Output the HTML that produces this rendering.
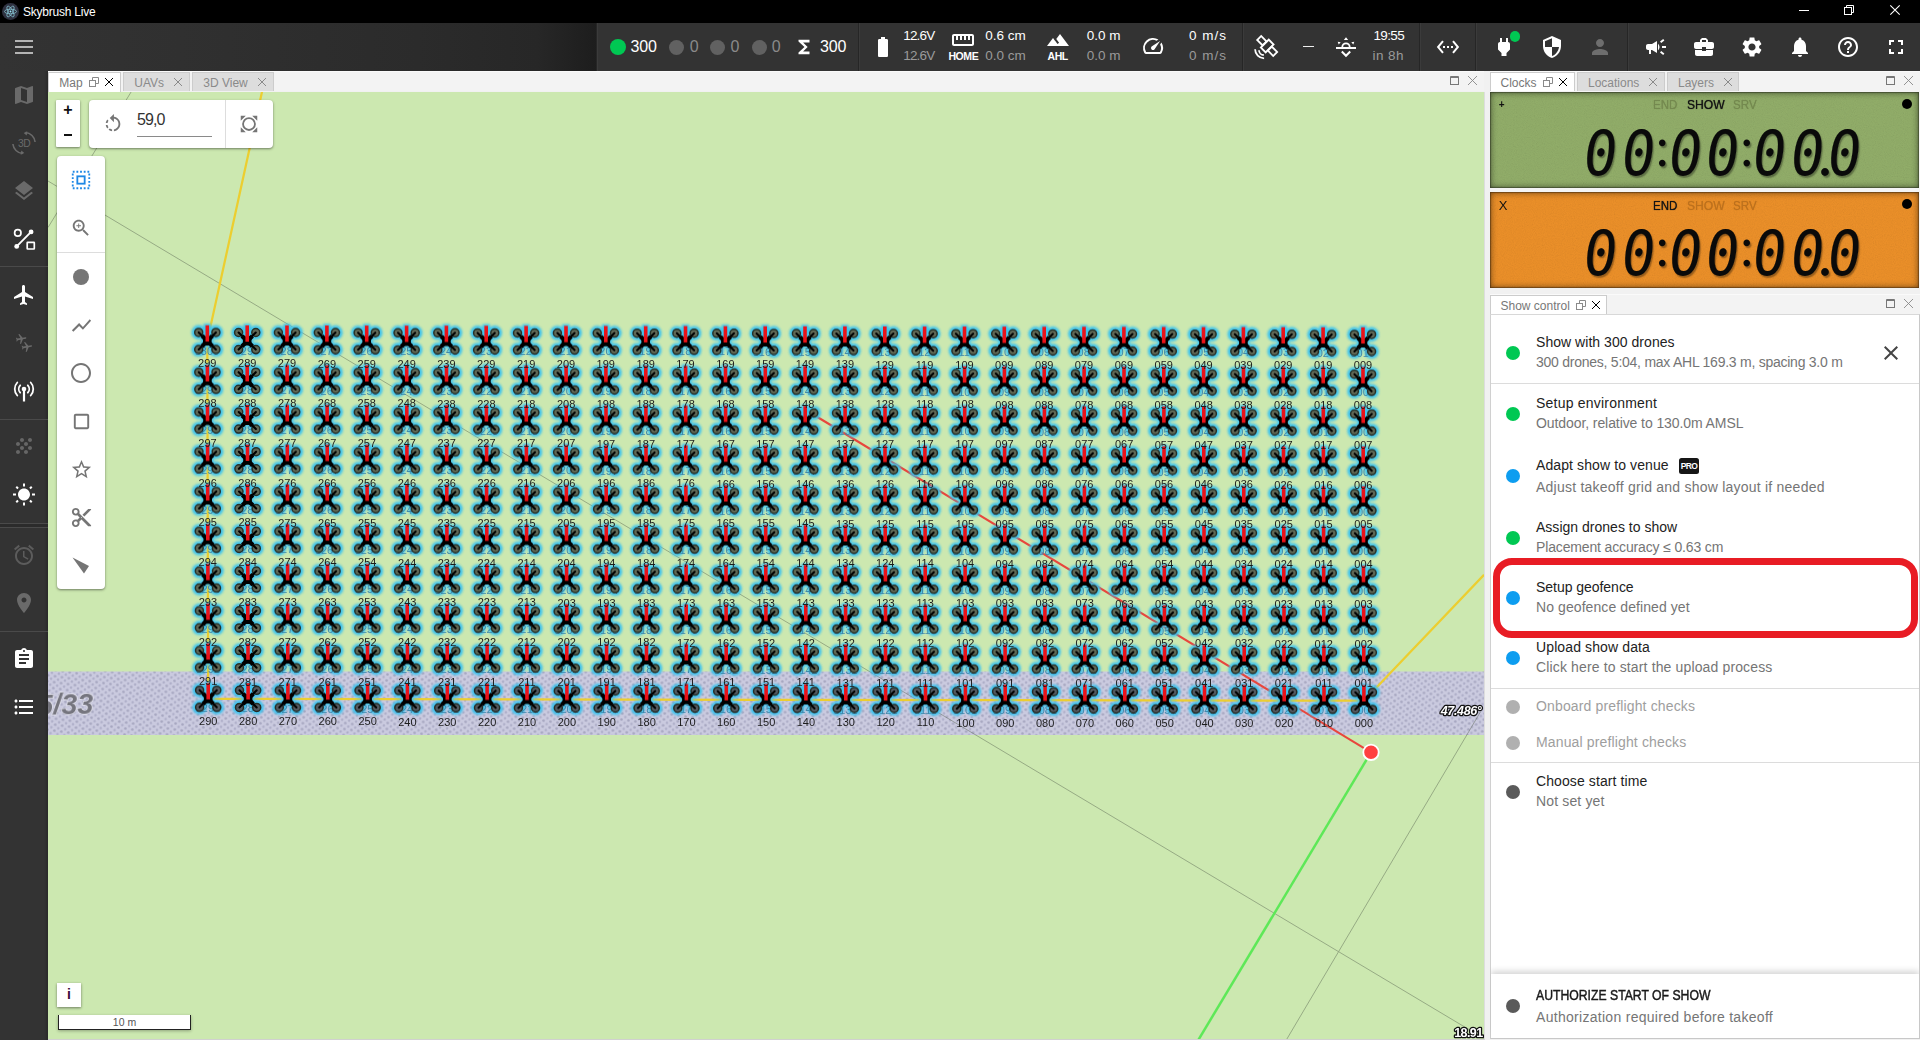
<!DOCTYPE html><html lang="en"><head><meta charset="utf-8"><title>Skybrush Live</title><style>
html,body{margin:0;padding:0}
body{width:1920px;height:1040px;overflow:hidden;position:relative;background:#f1f1f1;font-family:"Liberation Sans",sans-serif;color:#222}
.ic{position:absolute;display:block;overflow:visible}
.t{position:absolute;white-space:nowrap;line-height:1}
.a{position:absolute}
.w{color:#fff}.g{color:#9e9e9e}
.h16{font-size:16px}.h14{font-size:14px}
.tab{position:absolute;top:0;height:19px;border:1px solid #ccc;border-bottom:none;background:#ddd;box-sizing:border-box;font-size:12px;color:#8a8a8a}
.tab.on{background:#fff;height:20px;color:#777}
.tab span{position:absolute;top:3.500px;line-height:12px;white-space:nowrap}
.p1{font-size:14px;color:#222}
.p2{font-size:14px;color:#757575}
.dot{position:absolute;width:14px;height:14px;border-radius:50%}
.lcd{position:absolute;white-space:nowrap;font-family:"DejaVu Sans Mono","Liberation Mono",monospace;font-weight:normal;font-size:62px;line-height:70px;height:70px;color:#0a0a0a;text-shadow:1.500px 2px 1.500px rgba(0,0,0,.35);-webkit-text-stroke:.15px #0a0a0a}
.lcd span{display:inline-block;text-align:center}
.lcd .d{width:37.500px;transform:skewX(-7deg) scaleX(.9)}
.lcd .c{width:9.500px;font-family:"Liberation Serif",serif;font-size:56px;-webkit-text-stroke:0;text-indent:-3px;position:relative;top:-8.600px}
.lcd .p{width:0;font-family:"Liberation Serif",serif;font-weight:bold;font-size:48px;-webkit-text-stroke:0;text-indent:-7.500px;position:relative;top:1px}
</style></head><body>
<div class="a" style="left:0;top:0;width:1920px;height:23px;background:#000"></div>
<svg class="ic" style="left:2px;top:3px" width="17" height="17" viewBox="0 0 24 24" ><circle cx="12" cy="12" r="12" fill="#2f3241"/><g fill="none" stroke="#9feaf9" stroke-width="1.1" opacity=".8"><ellipse cx="12" cy="12" rx="8.5" ry="3.2"/><ellipse cx="12" cy="12" rx="8.5" ry="3.2" transform="rotate(60 12 12)"/><ellipse cx="12" cy="12" rx="8.5" ry="3.2" transform="rotate(120 12 12)"/></g><circle cx="12" cy="12" r="1.3" fill="#9feaf9"/></svg>
<div class="t w" style="left:23px;top:5.84px;font-size:12px;letter-spacing:-0.221px;">Skybrush Live</div>
<div class="a" style="left:1799px;top:10px;width:10px;height:1px;background:#fff"></div>
<svg class="ic" style="left:1844px;top:5px" width="10" height="10" viewBox="0 0 10 10" fill="none" stroke="#fff" stroke-width="1"><rect x=".5" y="2.500" width="7" height="7"/><path d="M2.500 2.500v-2h7v7h-2"/></svg>
<svg class="ic" style="left:1890px;top:5px" width="10" height="10" viewBox="0 0 10 10" fill="none" stroke="#fff" stroke-width="1.100"><path d="M.3 .3l9.400 9.400M9.700 .3l-9.400 9.400"/></svg>
<div class="a" style="left:0;top:23px;width:1920px;height:48px;background:#333"></div>
<div class="a" style="left:0;top:23px;width:597px;height:48px;background:linear-gradient(to right,#333 0,#303030 30%,#2b2b2b 70%,#272727 90%,#1d1d1d 100%)"></div>
<div class="a" style="left:596px;top:23px;width:1px;height:48px;background:#262626"></div>
<div class="a" style="left:597px;top:23px;width:1px;height:48px;background:#3b3b3b"></div>
<div class="a" style="left:858px;top:23px;width:1px;height:48px;background:#262626"></div>
<div class="a" style="left:859px;top:23px;width:1px;height:48px;background:#3b3b3b"></div>
<div class="a" style="left:1242px;top:23px;width:1px;height:48px;background:#262626"></div>
<div class="a" style="left:1243px;top:23px;width:1px;height:48px;background:#3b3b3b"></div>
<div class="a" style="left:1419px;top:23px;width:1px;height:48px;background:#262626"></div>
<div class="a" style="left:1420px;top:23px;width:1px;height:48px;background:#3b3b3b"></div>
<div class="a" style="left:1475px;top:23px;width:1px;height:48px;background:#262626"></div>
<div class="a" style="left:1476px;top:23px;width:1px;height:48px;background:#3b3b3b"></div>
<div class="a" style="left:1627px;top:23px;width:1px;height:48px;background:#262626"></div>
<div class="a" style="left:1628px;top:23px;width:1px;height:48px;background:#3b3b3b"></div>
<div class="a" style="left:15px;top:40px;width:18px;height:2px;background:#b4b4b4"></div>
<div class="a" style="left:15px;top:46px;width:18px;height:2px;background:#b4b4b4"></div>
<div class="a" style="left:15px;top:52px;width:18px;height:2px;background:#b4b4b4"></div>
<div class="a" style="left:610px;top:39px;width:16px;height:16px;border-radius:50%;background:#00c853"></div>
<div class="t w" style="left:630.5px;top:39.06px;font-size:16px;letter-spacing:-.2px">300</div>
<div class="a" style="left:669.3px;top:39.500px;width:15px;height:15px;border-radius:50%;background:#616161"></div>
<div class="t " style="left:689.7px;top:39.06px;font-size:16px;color:#8a8a8a">0</div>
<div class="a" style="left:710.2px;top:39.500px;width:15px;height:15px;border-radius:50%;background:#616161"></div>
<div class="t " style="left:730.6px;top:39.06px;font-size:16px;color:#8a8a8a">0</div>
<div class="a" style="left:751.5px;top:39.500px;width:15px;height:15px;border-radius:50%;background:#616161"></div>
<div class="t " style="left:771.7px;top:39.06px;font-size:16px;color:#8a8a8a">0</div>
<svg class="ic" style="left:793px;top:36px" width="22" height="22" viewBox="0 0 24 24" ><path d="M18 4H6v2l6.500 6L6 18v2h12v-3h-7l5-5-5-5h7z" fill="#fff"/></svg>
<div class="t w" style="left:820px;top:39.06px;font-size:16px;letter-spacing:-.2px">300</div>
<svg class="ic" style="left:871px;top:35px" width="24" height="24" viewBox="0 0 24 24" fill="#fff" opacity="1"><path d="M15.670 4H14V2h-4v2H8.330C7.600 4 7 4.600 7 5.330v15.330C7 21.400 7.600 22 8.330 22h7.330c.74 0 1.340-.6 1.340-1.330V5.330C17 4.600 16.400 4 15.670 4z"/></svg>
<div class="t w" style="right:985.7px;top:29.37px;font-size:13.5px;letter-spacing:-0.856px;">12.6V</div>
<div class="t " style="right:985.7px;top:49.17px;font-size:13.5px;color:#9a9a9a;letter-spacing:-0.856px;">12.6V</div>
<svg class="ic" style="left:950.8px;top:27.6px" width="24" height="24" viewBox="0 0 24 24" fill="#fff" opacity="1"><path d="M21 6H3c-1.100 0-2 .9-2 2v8c0 1.100.9 2 2 2h18c1.100 0 2-.9 2-2V8c0-1.100-.9-2-2-2zm0 10H3V8h2v4h2V8h2v4h2V8h2v4h2V8h2v4h2V8h2v8z"/></svg>
<div class="t w" style="left:948.4px;top:50.71px;font-size:10.5px;font-weight:bold;letter-spacing:-.4px">HOME</div>
<div class="t w" style="right:894.2px;top:29.37px;font-size:13.5px;">0.6 cm</div>
<div class="t " style="right:894.2px;top:49.17px;font-size:13.5px;color:#9a9a9a">0.0 cm</div>
<svg class="ic" style="left:1045.8px;top:27.6px" width="24" height="24" viewBox="0 0 24 24" fill="#fff" opacity="1"><path d="M14 6l-3.750 5 2.850 3.800-1.600 1.200C9.810 13.750 7 10 7 10l-6 8h22L14 6z"/></svg>
<div class="t w" style="left:1047.6px;top:50.71px;font-size:10.5px;font-weight:bold;letter-spacing:-.5px">AHL</div>
<div class="t w" style="right:799.4px;top:29.37px;font-size:13.5px;">0.0 m</div>
<div class="t " style="right:799.4px;top:49.17px;font-size:13.5px;color:#9a9a9a">0.0 m</div>
<svg class="ic" style="left:1141.3px;top:34px" width="24" height="24" viewBox="0 0 24 24" fill="#fff" opacity="1"><path d="M20.380 8.570l-1.230 1.850a8 8 0 0 1-.22 7.580H5.070A8 8 0 0 1 15.580 6.850l1.850-1.230A10 10 0 0 0 3.350 19a2 2 0 0 0 1.720 1h13.850a2 2 0 0 0 1.740-1 10 10 0 0 0-.27-10.440zm-9.790 6.840a2 2 0 0 0 2.830 0l5.660-8.490-8.490 5.660a2 2 0 0 0 0 2.830z"/></svg>
<div class="t w" style="right:693px;top:29.37px;font-size:13.5px;letter-spacing:0.997px;">0 m/s</div>
<div class="t " style="right:693px;top:49.17px;font-size:13.5px;color:#9a9a9a;letter-spacing:0.997px;">0 m/s</div>
<svg class="ic" style="left:1254px;top:35px" width="24" height="24" viewBox="0 0 24 24" ><g transform="translate(13.200 11) rotate(45)" fill="none" stroke="#fff" stroke-width="1.800" stroke-linejoin="miter"><rect x="-11.300" y="-2.800" width="7.600" height="5.600"/><rect x="3.700" y="-2.800" width="7.600" height="5.600"/><rect x="-3.400" y="-5.600" width="6.800" height="11.200"/></g><path d="M1.100 14.300a9 9 0 0 0 9 9M5 15.200a5 5 0 0 0 4.800 4.800" fill="none" stroke="#fff" stroke-width="1.800"/></svg>
<div class="a" style="left:1303px;top:46px;width:11px;height:1.300px;background:#eee"></div>
<svg class="ic" style="left:1334px;top:35px" width="24" height="24" viewBox="0 0 24 24" ><g fill="#fff"><path d="M2 12h20v2H2z"/><path d="M7.400 12a4.600 4.600 0 0 1 9.200 0h-1.800a2.800 2.800 0 0 0-5.600 0z"/><path d="M12 2.200l2.200 2.900H9.800z"/><path d="M3.700 6.700l3 .5-2 2.300zM20.300 6.700l-3 .5 2 2.300z"/></g><path d="M7.800 16.500l4.200 4.300 4.200-4.300" fill="none" stroke="#fff" stroke-width="2"/></svg>
<div class="t w" style="right:516px;top:29.37px;font-size:13.5px;letter-spacing:-0.659px;">19:55</div>
<div class="t " style="right:516px;top:49.17px;font-size:13.5px;color:#9a9a9a;letter-spacing:0.444px;">in 8h</div>
<svg class="ic" style="left:1436px;top:35px" width="24" height="24" viewBox="0 0 24 24" fill="#fff" opacity="1"><path d="M7.770 6.760L6.230 5.480.82 12l5.410 6.520 1.540-1.280L3.420 12l4.350-5.240zM7 13h2v-2H7v2zm10-2h-2v2h2v-2zm-6 2h2v-2h-2v2zm6.770-7.520l-1.540 1.280L20.580 12l-4.350 5.240 1.540 1.280L23.180 12l-5.410-6.520z"/></svg>
<svg class="ic" style="left:1492px;top:35px" width="24" height="24" viewBox="0 0 24 24" fill="#fff" opacity="1"><path d="M16.010 7L16 3h-2v4h-4V3H8v4h-.01C7 6.990 6 7.990 6 8.990v5.490L9.500 18v3h5v-3l3.500-3.510v-5.500c0-1-1-2-1.990-1.990z"/></svg>
<div class="a" style="left:1509.500px;top:31px;width:10.500px;height:10.500px;border-radius:50%;background:#00c853"></div>
<svg class="ic" style="left:1540px;top:35px" width="24" height="24" viewBox="0 0 24 24" fill="#fff" opacity="1"><path d="M12 1L3 5v6c0 5.550 3.840 10.740 9 12 5.160-1.260 9-6.450 9-12V5l-9-4zm0 10.990h7c-.53 4.120-3.280 7.790-7 8.940V12H5V6.300l7-3.110v8.800z"/></svg>
<svg class="ic" style="left:1588px;top:35px" width="24" height="24" viewBox="0 0 24 24" fill="#6e6e6e" opacity="1"><path d="M12 12c2.210 0 4-1.790 4-4s-1.790-4-4-4-4 1.790-4 4 1.790 4 4 4zm0 2c-2.670 0-8 1.340-8 4v2h16v-2c0-2.660-5.330-4-8-4z"/></svg>
<svg class="ic" style="left:1644px;top:35px" width="24" height="24" viewBox="0 0 24 24" fill="#fff" opacity="1"><path d="M18 11v2h4v-2h-4zm-2 6.610c.96.71 2.210 1.650 3.200 2.390.4-.53.8-1.070 1.200-1.600-.99-.74-2.240-1.680-3.200-2.400-.4.540-.8 1.080-1.200 1.610zM20.400 5.600c-.4-.53-.8-1.070-1.200-1.600-.99.74-2.240 1.680-3.200 2.400.4.530.8 1.070 1.200 1.600.96-.72 2.210-1.650 3.200-2.400zM4 9c-1.100 0-2 .9-2 2v2c0 1.100.9 2 2 2h1v4h2v-4h1l5 3V6L8 9H4zm11.500 3c0-1.330-.58-2.530-1.500-3.350v6.690c.92-.810 1.500-2.010 1.500-3.340z"/></svg>
<svg class="ic" style="left:1692px;top:35px" width="24" height="24" viewBox="0 0 24 24" fill="#fff" opacity="1"><path d="M10 16v-1H3.010L3 19c0 1.110.89 2 2 2h14c1.110 0 2-.89 2-2v-4h-7v1h-4zm10-9h-4.010V5l-2-2h-4l-2 2v2H4c-1.100 0-2 .9-2 2v3c0 1.110.89 2 2 2h6v-2h4v2h6c1.100 0 2-.9 2-2V9c0-1.100-.9-2-2-2zm-6 0h-4V5h4v2z"/></svg>
<svg class="ic" style="left:1740px;top:35px" width="24" height="24" viewBox="0 0 24 24" fill="#fff" opacity="1"><path d="M19.14 12.94c.04-.3.06-.61.06-.94 0-.32-.02-.64-.07-.94l2.030-1.580c.18-.14.23-.41.12-.61l-1.920-3.320c-.12-.22-.37-.29-.59-.22l-2.390.96c-.5-.38-1.030-.7-1.620-.94l-.36-2.540c-.04-.24-.24-.41-.48-.41h-3.840c-.24 0-.43.17-.47.41l-.36 2.540c-.59.24-1.130.57-1.620.94l-2.390-.96c-.22-.08-.47 0-.59.22L2.740 8.870c-.12.21-.08.47.12.61l2.030 1.580c-.05.3-.09.63-.09.94s.02.64.07.94l-2.030 1.580c-.18.14-.23.41-.12.61l1.920 3.320c.12.22.37.29.59.22l2.390-.96c.5.38 1.030.7 1.620.94l.36 2.540c.05.24.24.41.48.41h3.840c.24 0 .44-.17.47-.41l.36-2.540c.59-.24 1.130-.56 1.620-.94l2.390.96c.22.08.47 0 .59-.22l1.920-3.320c.12-.22.07-.47-.12-.61l-2.010-1.580zM12 15.600c-1.980 0-3.600-1.620-3.600-3.600s1.620-3.600 3.600-3.600 3.600 1.620 3.600 3.600-1.620 3.600-3.600 3.600z"/></svg>
<svg class="ic" style="left:1788px;top:35px" width="24" height="24" viewBox="0 0 24 24" fill="#fff" opacity="1"><path d="M12 22c1.1 0 2-.9 2-2h-4c0 1.100.89 2 2 2zm6-6v-5c0-3.070-1.640-5.640-4.500-6.320V4c0-.83-.67-1.500-1.500-1.500s-1.500.67-1.500 1.500v.68C7.630 5.360 6 7.920 6 11v5l-2 2v1h16v-1l-2-2z"/></svg>
<svg class="ic" style="left:1836px;top:35px" width="24" height="24" viewBox="0 0 24 24" fill="#fff" opacity="1"><path d="M11 18h2v-2h-2v2zm1-16C6.480 2 2 6.480 2 12s4.480 10 10 10 10-4.480 10-10S17.520 2 12 2zm0 18c-4.410 0-8-3.590-8-8s3.590-8 8-8 8 3.590 8 8-3.590 8-8 8zm0-14c-2.210 0-4 1.790-4 4h2c0-1.100.9-2 2-2s2 .9 2 2c0 2-3 1.750-3 5h2c0-2.250 3-2.500 3-5 0-2.210-1.790-4-4-4z"/></svg>
<svg class="ic" style="left:1884px;top:35px" width="24" height="24" viewBox="0 0 24 24" fill="#fff" opacity="1"><path d="M7 14H5v5h5v-2H7v-3zm-2-4h2V7h3V5H5v5zm12 7h-3v2h5v-5h-2v3zM14 5v2h3v3h2V5h-5z"/></svg>
<div class="a" style="left:0;top:71px;width:48px;height:969px;background:#333"></div>
<div class="a" style="left:44px;top:71px;width:4px;height:969px;background:linear-gradient(to right,rgba(0,0,0,0),rgba(0,0,0,.18))"></div>
<svg class="ic" style="left:12px;top:83px" width="24" height="24" viewBox="0 0 24 24" fill="#6a6a6a" opacity="1"><path d="M20.5 3l-.16.03L15 5.1 9 3 3.36 4.9c-.21.07-.36.25-.36.48V20.5c0 .28.22.5.5.5l.16-.03L9 18.9l6 2.1 5.64-1.9c.21-.07.36-.25.36-.48V3.5c0-.28-.22-.5-.5-.5zM15 19l-6-2.11V5l6 2.11V19z"/></svg>
<svg class="ic" style="left:12px;top:131px" width="24" height="24" viewBox="0 0 24 24" ><g fill="none" stroke="#6a6a6a" stroke-width="1.600"><path d="M13.500 1.500a10.600 10.600 0 0 1 9.600 9.500"/><path d="M10.500 22.500a10.600 10.600 0 0 1-9.600-9.500"/></g><path d="M15.300 .2l-3.600 1.700 3 2.500zM8.700 23.800l3.600-1.700-3-2.500z" fill="#6a6a6a"/><text x="12" y="15.800" font-size="10.300" text-anchor="middle" fill="#6a6a6a" letter-spacing="-.6" font-family="Liberation Sans, sans-serif">3D</text></svg>
<svg class="ic" style="left:12px;top:179px" width="24" height="24" viewBox="0 0 24 24" fill="#6a6a6a" opacity="1"><path d="M11.99 18.54l-7.37-5.73L3 14.07l9 7 9-7-1.63-1.27-7.38 5.74zM12 16l7.36-5.73L21 9l-9-7-9 7 1.63 1.27L12 16z"/></svg>
<svg class="ic" style="left:12px;top:226.7px" width="24" height="24" viewBox="0 0 24 24" ><g fill="none" stroke="#fff"><circle cx="5.800" cy="5.900" r="3.200" stroke-width="1.700"/><path d="M4.700 19.400L19.100 4.900" stroke-width="1.900"/><rect x="15.200" y="15.400" width="7.100" height="6.600" rx=".4" stroke-width="1.700"/></g><circle cx="4.700" cy="19.400" r="2.400" fill="#fff"/><circle cx="19.100" cy="4.900" r="2.400" fill="#fff"/></svg>
<div class="a" style="left:0;top:266px;width:48px;height:1px;background:#4a4a4a"></div>
<svg class="ic" style="left:12px;top:283px" width="24" height="24" viewBox="0 0 24 24" fill="#fff" opacity="1"><path d="M21 16v-2l-8-5V3.5c0-.83-.67-1.5-1.5-1.5S10 2.67 10 3.5V9l-8 5v2l8-2.5V19l-2 1.5V22l3.5-1 3.5 1v-1.5L13 19v-5.5l8 2.5z"/></svg>
<svg class="ic" style="left:12px;top:331px" width="24" height="24" viewBox="0 0 24 24" ><g fill="#6a6a6a"><g transform="translate(9.300 8) rotate(80) scale(.52) translate(-12 -12)"><path d="M21 16v-2l-8-5V3.5c0-.83-.67-1.5-1.5-1.5S10 2.67 10 3.5V9l-8 5v2l8-2.5V19l-2 1.5V22l3.5-1 3.5 1v-1.5L13 19v-5.5l8 2.5z"/></g><g transform="translate(15 16) rotate(80) scale(.52) translate(-12 -12)"><path d="M21 16v-2l-8-5V3.5c0-.83-.67-1.5-1.5-1.5S10 2.67 10 3.5V9l-8 5v2l8-2.5V19l-2 1.5V22l3.5-1 3.5 1v-1.5L13 19v-5.5l8 2.5z"/></g></g></svg>
<svg class="ic" style="left:12px;top:379px" width="24" height="24" viewBox="0 0 24 24" ><g fill="none" stroke="#fff" stroke-width="1.800" stroke-linecap="round"><path d="M8.200 6.300a5.500 5.500 0 0 0 0 7.400M15.800 6.300a5.500 5.500 0 0 1 0 7.400M5.300 3.500a9.500 9.500 0 0 0 0 13M18.700 3.500a9.500 9.500 0 0 1 0 13"/></g><circle cx="12" cy="10" r="2.300" fill="#fff"/><rect x="10.900" y="10" width="2.200" height="12.500" fill="#fff"/></svg>
<div class="a" style="left:0;top:418.500px;width:48px;height:1px;background:#4a4a4a"></div>
<svg class="ic" style="left:12px;top:434px" width="24" height="24" viewBox="0 0 24 24" fill="#666" opacity="1"><path d="M10 12c-1.1 0-2 .9-2 2s.9 2 2 2 2-.9 2-2-.9-2-2-2zM6 8c-1.1 0-2 .9-2 2s.9 2 2 2 2-.9 2-2-.9-2-2-2zm0 8c-1.1 0-2 .9-2 2s.9 2 2 2 2-.9 2-2-.9-2-2-2zm12-8c1.1 0 2-.9 2-2s-.9-2-2-2-2 .9-2 2 .9 2 2 2zm-4 8c-1.1 0-2 .9-2 2s.9 2 2 2 2-.9 2-2-.9-2-2-2zm4-4c-1.1 0-2 .9-2 2s.9 2 2 2 2-.9 2-2-.9-2-2-2zm-4-4c-1.1 0-2 .9-2 2s.9 2 2 2 2-.9 2-2-.9-2-2-2zm-4-4c-1.1 0-2 .9-2 2s.9 2 2 2 2-.9 2-2-.9-2-2-2z"/></svg>
<svg class="ic" style="left:12px;top:482.8px" width="24" height="24" viewBox="0 0 24 24" fill="#fff" opacity="1"><path d="M6.76 4.84l-1.8-1.79-1.41 1.41 1.79 1.79 1.42-1.41zM4 10.5H1v2h3v-2zm9-9.95h-2V3.5h2V.55zm7.45 3.91l-1.41-1.41-1.79 1.79 1.41 1.41 1.79-1.79zm-3.21 13.7l1.79 1.8 1.41-1.41-1.8-1.79-1.4 1.4zM20 10.5v2h3v-2h-3zm-8-5c-3.31 0-6 2.69-6 6s2.69 6 6 6 6-2.69 6-6-2.69-6-6-6zm-1 16.95h2V19.5h-2v2.95zm-7.45-3.91l1.41 1.41 1.79-1.8-1.41-1.41-1.79 1.8z"/></svg>
<div class="a" style="left:0;top:523px;width:48px;height:5px;background:#2b2b2b;border-top:1px solid #4a4a4a;border-bottom:1px solid #4a4a4a;box-sizing:border-box"></div>
<svg class="ic" style="left:12px;top:543px" width="24" height="24" viewBox="0 0 24 24" fill="#5c5c5c" opacity="1"><path d="M22 5.72l-4.6-3.86-1.29 1.53 4.6 3.86L22 5.72zM7.88 3.39L6.6 1.86 2 5.71l1.29 1.53 4.59-3.85zM12.5 8H11v6l4.75 2.85.75-1.23-4-2.37V8zM12 4c-4.97 0-9 4.03-9 9s4.02 9 9 9c4.97 0 9-4.03 9-9s-4.03-9-9-9zm0 16c-3.87 0-7-3.13-7-7s3.13-7 7-7 7 3.13 7 7-3.13 7-7 7z"/></svg>
<svg class="ic" style="left:12px;top:591px" width="24" height="24" viewBox="0 0 24 24" fill="#6a6a6a" opacity="1"><path d="M12 2C8.13 2 5 5.13 5 9c0 5.25 7 13 7 13s7-7.75 7-13c0-3.87-3.13-7-7-7zm0 9.5c-1.38 0-2.5-1.12-2.5-2.5s1.12-2.5 2.5-2.5 2.5 1.12 2.5 2.5-1.12 2.5-2.5 2.5z"/></svg>
<div class="a" style="left:0;top:630.500px;width:48px;height:1px;background:#4a4a4a"></div>
<svg class="ic" style="left:12px;top:647px" width="24" height="24" viewBox="0 0 24 24" fill="#fff" opacity="1"><path d="M19 3h-4.18C14.4 1.84 13.3 1 12 1c-1.3 0-2.4.84-2.82 2H5c-1.1 0-2 .9-2 2v14c0 1.1.9 2 2 2h14c1.1 0 2-.9 2-2V5c0-1.1-.9-2-2-2zm-7 0c.55 0 1 .45 1 1s-.45 1-1 1-1-.45-1-1 .45-1 1-1zm2 14H7v-2h7v2zm3-4H7v-2h10v2zm0-4H7V7h10v2z"/></svg>
<svg class="ic" style="left:12px;top:695px" width="24" height="24" viewBox="0 0 24 24" fill="#fff" opacity="1"><path d="M4 10.5c-.83 0-1.5.67-1.5 1.5s.67 1.5 1.5 1.5 1.5-.67 1.5-1.5-.67-1.5-1.5-1.5zm0-6c-.83 0-1.5.67-1.5 1.5S3.17 7.5 4 7.5 5.500 6.830 5.500 6 4.830 4.500 4 4.500zm0 12c-.83 0-1.500.68-1.500 1.500s.68 1.500 1.500 1.500 1.500-.68 1.500-1.500-.67-1.500-1.500-1.500zM7 19h14v-2H7v2zm0-6h14v-2H7v2zm0-8v2h14V5H7z"/></svg>
<div class="a" style="left:48px;top:71px;width:1436px;height:20px;background:#f3f3f3;border-top:1px solid #fafafa;box-sizing:border-box"></div>
<div class="tab on" style="left:48px;top:72px;width:72.5px"><span style="left:10.3px">Map</span></div>
<svg class="ic" style="left:88.7px;top:77px" width="10" height="10" viewBox="0 0 10 10" fill="none" stroke="#8a8a8a" stroke-width="1"><rect x=".5" y="3.500" width="6" height="6"/><path d="M3.500 3.500v-3h6v6h-3"/></svg>
<svg class="ic" style="left:104.7px;top:78px" width="8" height="8" viewBox="0 0 8 8" fill="none" stroke="#000" stroke-width="1"><path d="M0 0l8 8M8 0l-8 8"/></svg>
<div class="tab" style="left:123px;top:72px;width:66.5px"><span style="left:10.3px">UAVs</span></div>
<svg class="ic" style="left:173.5px;top:78px" width="8" height="8" viewBox="0 0 8 8" fill="none" stroke="#8a8a8a" stroke-width="1"><path d="M0 0l8 8M8 0l-8 8"/></svg>
<div class="tab" style="left:192px;top:72px;width:82px"><span style="left:10.3px">3D View</span></div>
<svg class="ic" style="left:257.5px;top:78px" width="8" height="8" viewBox="0 0 8 8" fill="none" stroke="#8a8a8a" stroke-width="1"><path d="M0 0l8 8M8 0l-8 8"/></svg>
<svg class="ic" style="left:1450px;top:76px" width="9" height="9" viewBox="0 0 9 9" fill="none" stroke="#777"><rect x=".5" y="1" width="8" height="7.500"/><path d="M.5 1h8" stroke-width="2"/></svg>
<svg class="ic" style="left:1468px;top:76px" width="9" height="9" viewBox="0 0 9 9" fill="none" stroke="#888" stroke-width=".9"><path d="M0 0l9 9M9 0l-9 9"/></svg>
<div class="a" id="map" style="left:48px;top:91.5px;width:1435.5px;height:947px;background:#cce8b0;overflow:hidden;border-right:1px solid #ddd;border-bottom:1px solid #d0d0d0">
<svg class="ic" style="left:0;top:0" width="1436" height="948" viewBox="48 91.5 1436 948" font-family="Liberation Sans, sans-serif"><defs>
<pattern id="dots" width="7" height="6" patternUnits="userSpaceOnUse" patternTransform="rotate(8)"><rect width="7" height="6" fill="#cacadf"/><circle cx="1.500" cy="1.500" r="1.300" fill="#a6a6c0"/><circle cx="5" cy="4.500" r="1.200" fill="#aeaec8"/></pattern>
<filter id="bl" x="-5%" y="-5%" width="110%" height="110%"><feGaussianBlur stdDeviation="1.100"/></filter>
<filter id="bl2"><feGaussianBlur stdDeviation=".55"/></filter>
<g id="gl"><circle cx="-8.600" cy="-8.700" r="7.300"/><circle cx="8.600" cy="-8.700" r="7.300"/><circle cx="-8.600" cy="8.400" r="7.300"/><circle cx="8.600" cy="8.400" r="7.300"/><path d="M-8.600-8.700L8.600 8.400M8.600-8.700L-8.600 8.400" stroke="#3fc4ee" stroke-width="8" fill="none"/><rect x="-3.800" y="-17.500" width="7.600" height="18"/></g>
<g id="dr"><g fill="#62644e" stroke="#252a1f" stroke-width="1.500" opacity=".95"><circle cx="-8.600" cy="-8.700" r="4"/><circle cx="8.600" cy="-8.700" r="4"/><circle cx="-8.600" cy="8.400" r="4"/><circle cx="8.600" cy="8.400" r="4"/></g><path d="M-8.600-8.700L8.600 8.400M8.600-8.700L-8.600 8.400" stroke="#000" stroke-width="2.100" fill="none" stroke-linecap="round"/><path d="M-5.200-5.300L5.200 5.100M5.200-5.300L-5.200 5.100" stroke="#000" stroke-width="4.200" fill="none"/><rect x="-4.300" y="-4.400" width="8.600" height="8.800" rx="1" fill="#000"/><rect x="-1.800" y="-15.800" width="3.600" height="16.300" fill="#ea1219"/></g>
<g id="dg"><g fill="#55555a" stroke="#23241c" stroke-width="1.500" opacity=".95"><circle cx="-8.600" cy="-8.700" r="4"/><circle cx="8.600" cy="-8.700" r="4"/><circle cx="-8.600" cy="8.400" r="4"/><circle cx="8.600" cy="8.400" r="4"/></g><path d="M-8.600-8.700L8.600 8.400M8.600-8.700L-8.600 8.400" stroke="#000" stroke-width="2.100" fill="none" stroke-linecap="round"/><path d="M-5.200-5.300L5.200 5.100M5.200-5.300L-5.200 5.100" stroke="#000" stroke-width="4.200" fill="none"/><rect x="-4.300" y="-4.400" width="8.600" height="8.800" rx="1" fill="#000"/><rect x="-1.800" y="-15.800" width="3.600" height="16.300" fill="#ea1219"/></g>
</defs><rect x="48" y="671" width="1436" height="63.500" fill="url(#dots)"/><text x="37" y="713.500" font-size="29" font-style="italic" font-weight="bold" fill="#74747e" stroke="#e6e6f0" stroke-width="1.400" paint-order="stroke" transform="rotate(-1.500 60 705)" filter="url(#bl2)" letter-spacing="0">5/33</text><g stroke="#55604e" stroke-width=".9" fill="none" opacity=".5"><path d="M48 180.500L1484 1038"/><path d="M1480.700 711L1286 1040"/><path d="M132 90L48 227"/></g><path d="M262.300 90L207.300 340.600L208.200 698.400L1363.800 700.200L1484 574.300" fill="none" stroke="#ecce30" stroke-width="2.250" stroke-linejoin="round"/><path d="M805 409L1371 751.800" stroke="#e8463c" stroke-width="2.100" fill="none"/><path d="M1371 751.800L1198 1040" stroke="#5ee858" stroke-width="2.500" fill="none"/><g fill="#3ac2ef" filter="url(#bl)" opacity=".95"><use href="#gl" x="207.3" y="340.6"/><use href="#gl" x="207.4" y="380.4"/><use href="#gl" x="207.5" y="420.1"/><use href="#gl" x="207.6" y="459.9"/><use href="#gl" x="207.7" y="499.6"/><use href="#gl" x="207.8" y="539.4"/><use href="#gl" x="207.9" y="579.2"/><use href="#gl" x="208.0" y="618.9"/><use href="#gl" x="208.1" y="658.7"/><use href="#gl" x="208.2" y="698.4"/><use href="#gl" x="247.2" y="340.7"/><use href="#gl" x="247.2" y="380.4"/><use href="#gl" x="247.3" y="420.2"/><use href="#gl" x="247.5" y="459.9"/><use href="#gl" x="247.6" y="499.7"/><use href="#gl" x="247.7" y="539.5"/><use href="#gl" x="247.8" y="579.2"/><use href="#gl" x="247.8" y="619.0"/><use href="#gl" x="248.0" y="658.8"/><use href="#gl" x="248.1" y="698.5"/><use href="#gl" x="287.0" y="340.7"/><use href="#gl" x="287.1" y="380.5"/><use href="#gl" x="287.2" y="420.3"/><use href="#gl" x="287.3" y="460.0"/><use href="#gl" x="287.4" y="499.8"/><use href="#gl" x="287.5" y="539.5"/><use href="#gl" x="287.6" y="579.3"/><use href="#gl" x="287.7" y="619.1"/><use href="#gl" x="287.8" y="658.8"/><use href="#gl" x="287.9" y="698.6"/><use href="#gl" x="326.9" y="340.8"/><use href="#gl" x="327.0" y="380.6"/><use href="#gl" x="327.1" y="420.3"/><use href="#gl" x="327.2" y="460.1"/><use href="#gl" x="327.2" y="499.8"/><use href="#gl" x="327.4" y="539.6"/><use href="#gl" x="327.5" y="579.4"/><use href="#gl" x="327.6" y="619.1"/><use href="#gl" x="327.7" y="658.9"/><use href="#gl" x="327.8" y="698.7"/><use href="#gl" x="366.7" y="340.9"/><use href="#gl" x="366.8" y="380.6"/><use href="#gl" x="366.9" y="420.4"/><use href="#gl" x="367.0" y="460.2"/><use href="#gl" x="367.1" y="499.9"/><use href="#gl" x="367.2" y="539.7"/><use href="#gl" x="367.3" y="579.4"/><use href="#gl" x="367.4" y="619.2"/><use href="#gl" x="367.5" y="659.0"/><use href="#gl" x="367.6" y="698.7"/><use href="#gl" x="406.6" y="341.0"/><use href="#gl" x="406.7" y="380.7"/><use href="#gl" x="406.8" y="420.5"/><use href="#gl" x="406.9" y="460.2"/><use href="#gl" x="406.9" y="500.0"/><use href="#gl" x="407.1" y="539.8"/><use href="#gl" x="407.2" y="579.5"/><use href="#gl" x="407.2" y="619.3"/><use href="#gl" x="407.4" y="659.0"/><use href="#gl" x="407.4" y="698.8"/><use href="#gl" x="446.4" y="341.0"/><use href="#gl" x="446.5" y="380.8"/><use href="#gl" x="446.6" y="420.5"/><use href="#gl" x="446.7" y="460.3"/><use href="#gl" x="446.8" y="500.1"/><use href="#gl" x="446.9" y="539.8"/><use href="#gl" x="447.0" y="579.6"/><use href="#gl" x="447.1" y="619.3"/><use href="#gl" x="447.2" y="659.1"/><use href="#gl" x="447.3" y="698.9"/><use href="#gl" x="486.2" y="341.1"/><use href="#gl" x="486.4" y="380.9"/><use href="#gl" x="486.4" y="420.6"/><use href="#gl" x="486.6" y="460.4"/><use href="#gl" x="486.6" y="500.1"/><use href="#gl" x="486.8" y="539.9"/><use href="#gl" x="486.9" y="579.7"/><use href="#gl" x="486.9" y="619.4"/><use href="#gl" x="487.1" y="659.2"/><use href="#gl" x="487.1" y="698.9"/><use href="#gl" x="526.1" y="341.2"/><use href="#gl" x="526.2" y="380.9"/><use href="#gl" x="526.3" y="420.7"/><use href="#gl" x="526.4" y="460.4"/><use href="#gl" x="526.5" y="500.2"/><use href="#gl" x="526.6" y="540.0"/><use href="#gl" x="526.7" y="579.7"/><use href="#gl" x="526.8" y="619.5"/><use href="#gl" x="526.9" y="659.2"/><use href="#gl" x="527.0" y="699.0"/><use href="#gl" x="566.0" y="341.2"/><use href="#gl" x="566.1" y="381.0"/><use href="#gl" x="566.2" y="420.8"/><use href="#gl" x="566.2" y="460.5"/><use href="#gl" x="566.4" y="500.3"/><use href="#gl" x="566.5" y="540.0"/><use href="#gl" x="566.6" y="579.8"/><use href="#gl" x="566.7" y="619.6"/><use href="#gl" x="566.8" y="659.3"/><use href="#gl" x="566.9" y="699.1"/><use href="#gl" x="605.8" y="341.3"/><use href="#gl" x="605.9" y="381.1"/><use href="#gl" x="606.0" y="420.8"/><use href="#gl" x="606.1" y="460.6"/><use href="#gl" x="606.2" y="500.3"/><use href="#gl" x="606.3" y="540.1"/><use href="#gl" x="606.4" y="579.9"/><use href="#gl" x="606.5" y="619.6"/><use href="#gl" x="606.6" y="659.4"/><use href="#gl" x="606.7" y="699.1"/><use href="#gl" x="645.7" y="341.4"/><use href="#gl" x="645.8" y="381.1"/><use href="#gl" x="645.9" y="420.9"/><use href="#gl" x="646.0" y="460.6"/><use href="#gl" x="646.1" y="500.4"/><use href="#gl" x="646.2" y="540.2"/><use href="#gl" x="646.3" y="579.9"/><use href="#gl" x="646.4" y="619.7"/><use href="#gl" x="646.5" y="659.5"/><use href="#gl" x="646.6" y="699.2"/><use href="#gl" x="685.5" y="341.4"/><use href="#gl" x="685.6" y="381.2"/><use href="#gl" x="685.7" y="421.0"/><use href="#gl" x="685.8" y="460.7"/><use href="#gl" x="685.9" y="500.5"/><use href="#gl" x="686.0" y="540.2"/><use href="#gl" x="686.1" y="580.0"/><use href="#gl" x="686.2" y="619.8"/><use href="#gl" x="686.3" y="659.5"/><use href="#gl" x="686.4" y="699.3"/><use href="#gl" x="725.4" y="341.5"/><use href="#gl" x="725.5" y="381.3"/><use href="#gl" x="725.6" y="421.0"/><use href="#gl" x="725.7" y="460.8"/><use href="#gl" x="725.8" y="500.6"/><use href="#gl" x="725.9" y="540.3"/><use href="#gl" x="726.0" y="580.1"/><use href="#gl" x="726.1" y="619.8"/><use href="#gl" x="726.2" y="659.6"/><use href="#gl" x="726.3" y="699.4"/><use href="#gl" x="765.2" y="341.6"/><use href="#gl" x="765.3" y="381.3"/><use href="#gl" x="765.4" y="421.1"/><use href="#gl" x="765.5" y="460.9"/><use href="#gl" x="765.6" y="500.6"/><use href="#gl" x="765.7" y="540.4"/><use href="#gl" x="765.8" y="580.1"/><use href="#gl" x="765.9" y="619.9"/><use href="#gl" x="766.0" y="659.7"/><use href="#gl" x="766.1" y="699.4"/><use href="#gl" x="805.0" y="341.7"/><use href="#gl" x="805.1" y="381.4"/><use href="#gl" x="805.2" y="421.2"/><use href="#gl" x="805.3" y="460.9"/><use href="#gl" x="805.4" y="500.7"/><use href="#gl" x="805.5" y="540.4"/><use href="#gl" x="805.6" y="580.2"/><use href="#gl" x="805.8" y="620.0"/><use href="#gl" x="805.8" y="659.7"/><use href="#gl" x="805.9" y="699.5"/><use href="#gl" x="844.9" y="341.7"/><use href="#gl" x="845.0" y="381.5"/><use href="#gl" x="845.1" y="421.2"/><use href="#gl" x="845.2" y="461.0"/><use href="#gl" x="845.3" y="500.8"/><use href="#gl" x="845.4" y="540.5"/><use href="#gl" x="845.5" y="580.3"/><use href="#gl" x="845.6" y="620.0"/><use href="#gl" x="845.7" y="659.8"/><use href="#gl" x="845.8" y="699.6"/><use href="#gl" x="884.8" y="341.8"/><use href="#gl" x="884.9" y="381.6"/><use href="#gl" x="885.0" y="421.3"/><use href="#gl" x="885.0" y="461.1"/><use href="#gl" x="885.1" y="500.8"/><use href="#gl" x="885.2" y="540.6"/><use href="#gl" x="885.4" y="580.4"/><use href="#gl" x="885.5" y="620.1"/><use href="#gl" x="885.5" y="659.9"/><use href="#gl" x="885.6" y="699.6"/><use href="#gl" x="924.6" y="341.9"/><use href="#gl" x="924.7" y="381.6"/><use href="#gl" x="924.8" y="421.4"/><use href="#gl" x="924.9" y="461.1"/><use href="#gl" x="925.0" y="500.9"/><use href="#gl" x="925.1" y="540.7"/><use href="#gl" x="925.2" y="580.4"/><use href="#gl" x="925.3" y="620.2"/><use href="#gl" x="925.4" y="659.9"/><use href="#gl" x="925.5" y="699.7"/><use href="#gl" x="964.5" y="341.9"/><use href="#gl" x="964.6" y="381.7"/><use href="#gl" x="964.7" y="421.4"/><use href="#gl" x="964.8" y="461.2"/><use href="#gl" x="964.9" y="501.0"/><use href="#gl" x="965.0" y="540.7"/><use href="#gl" x="965.1" y="580.5"/><use href="#gl" x="965.2" y="620.3"/><use href="#gl" x="965.2" y="660.0"/><use href="#gl" x="965.4" y="699.8"/><use href="#gl" x="1004.3" y="342.0"/><use href="#gl" x="1004.4" y="381.8"/><use href="#gl" x="1004.5" y="421.5"/><use href="#gl" x="1004.6" y="461.3"/><use href="#gl" x="1004.7" y="501.0"/><use href="#gl" x="1004.8" y="540.8"/><use href="#gl" x="1004.9" y="580.6"/><use href="#gl" x="1005.0" y="620.3"/><use href="#gl" x="1005.1" y="660.1"/><use href="#gl" x="1005.2" y="699.8"/><use href="#gl" x="1044.2" y="342.1"/><use href="#gl" x="1044.2" y="381.8"/><use href="#gl" x="1044.4" y="421.6"/><use href="#gl" x="1044.5" y="461.4"/><use href="#gl" x="1044.6" y="501.1"/><use href="#gl" x="1044.7" y="540.9"/><use href="#gl" x="1044.8" y="580.6"/><use href="#gl" x="1044.9" y="620.4"/><use href="#gl" x="1045.0" y="660.2"/><use href="#gl" x="1045.1" y="699.9"/><use href="#gl" x="1084.0" y="342.1"/><use href="#gl" x="1084.1" y="381.9"/><use href="#gl" x="1084.2" y="421.7"/><use href="#gl" x="1084.3" y="461.4"/><use href="#gl" x="1084.4" y="501.2"/><use href="#gl" x="1084.5" y="540.9"/><use href="#gl" x="1084.6" y="580.7"/><use href="#gl" x="1084.7" y="620.5"/><use href="#gl" x="1084.8" y="660.2"/><use href="#gl" x="1084.9" y="700.0"/><use href="#gl" x="1123.9" y="342.2"/><use href="#gl" x="1124.0" y="382.0"/><use href="#gl" x="1124.1" y="421.7"/><use href="#gl" x="1124.2" y="461.5"/><use href="#gl" x="1124.3" y="501.2"/><use href="#gl" x="1124.4" y="541.0"/><use href="#gl" x="1124.5" y="580.8"/><use href="#gl" x="1124.6" y="620.5"/><use href="#gl" x="1124.7" y="660.3"/><use href="#gl" x="1124.8" y="700.1"/><use href="#gl" x="1163.7" y="342.3"/><use href="#gl" x="1163.8" y="382.0"/><use href="#gl" x="1163.9" y="421.8"/><use href="#gl" x="1164.0" y="461.6"/><use href="#gl" x="1164.1" y="501.3"/><use href="#gl" x="1164.2" y="541.1"/><use href="#gl" x="1164.3" y="580.8"/><use href="#gl" x="1164.4" y="620.6"/><use href="#gl" x="1164.5" y="660.4"/><use href="#gl" x="1164.6" y="700.1"/><use href="#gl" x="1203.5" y="342.4"/><use href="#gl" x="1203.6" y="382.1"/><use href="#gl" x="1203.8" y="421.9"/><use href="#gl" x="1203.8" y="461.6"/><use href="#gl" x="1204.0" y="501.4"/><use href="#gl" x="1204.0" y="541.1"/><use href="#gl" x="1204.1" y="580.9"/><use href="#gl" x="1204.2" y="620.7"/><use href="#gl" x="1204.3" y="660.4"/><use href="#gl" x="1204.5" y="700.2"/><use href="#gl" x="1243.4" y="342.4"/><use href="#gl" x="1243.5" y="382.2"/><use href="#gl" x="1243.6" y="421.9"/><use href="#gl" x="1243.7" y="461.7"/><use href="#gl" x="1243.8" y="501.5"/><use href="#gl" x="1243.9" y="541.2"/><use href="#gl" x="1244.0" y="581.0"/><use href="#gl" x="1244.1" y="620.7"/><use href="#gl" x="1244.2" y="660.5"/><use href="#gl" x="1244.3" y="700.3"/><use href="#gl" x="1283.2" y="342.5"/><use href="#gl" x="1283.3" y="382.2"/><use href="#gl" x="1283.5" y="422.0"/><use href="#gl" x="1283.5" y="461.8"/><use href="#gl" x="1283.7" y="501.5"/><use href="#gl" x="1283.8" y="541.3"/><use href="#gl" x="1283.8" y="581.1"/><use href="#gl" x="1284.0" y="620.8"/><use href="#gl" x="1284.0" y="660.6"/><use href="#gl" x="1284.2" y="700.3"/><use href="#gl" x="1323.1" y="342.6"/><use href="#gl" x="1323.2" y="382.3"/><use href="#gl" x="1323.3" y="422.1"/><use href="#gl" x="1323.4" y="461.8"/><use href="#gl" x="1323.5" y="501.6"/><use href="#gl" x="1323.6" y="541.4"/><use href="#gl" x="1323.7" y="581.1"/><use href="#gl" x="1323.8" y="620.9"/><use href="#gl" x="1323.9" y="660.6"/><use href="#gl" x="1324.0" y="700.4"/><use href="#gl" x="1363.0" y="342.6"/><use href="#gl" x="1363.0" y="382.4"/><use href="#gl" x="1363.2" y="422.1"/><use href="#gl" x="1363.2" y="461.9"/><use href="#gl" x="1363.4" y="501.7"/><use href="#gl" x="1363.5" y="541.4"/><use href="#gl" x="1363.5" y="581.2"/><use href="#gl" x="1363.7" y="621.0"/><use href="#gl" x="1363.8" y="660.7"/><use href="#gl" x="1363.9" y="700.5"/></g><g font-size="11" text-anchor="middle" fill="#3d86aa" opacity=".95"><text x="207.3" y="354.0">s300</text><text x="207.4" y="393.8">s299</text><text x="207.5" y="433.5">s298</text><text x="207.6" y="473.3">s297</text><text x="207.7" y="513.0">s296</text><text x="207.8" y="552.8">s295</text><text x="207.9" y="592.6">s294</text><text x="208.0" y="632.3">s293</text><text x="208.1" y="672.1">s292</text><text x="208.2" y="711.8">s291</text><text x="247.2" y="354.1">s290</text><text x="247.2" y="393.8">s289</text><text x="247.3" y="433.6">s288</text><text x="247.5" y="473.3">s287</text><text x="247.6" y="513.1">s286</text><text x="247.7" y="552.9">s285</text><text x="247.8" y="592.6">s284</text><text x="247.8" y="632.4">s283</text><text x="248.0" y="672.2">s282</text><text x="248.1" y="711.9">s281</text><text x="287.0" y="354.1">s280</text><text x="287.1" y="393.9">s279</text><text x="287.2" y="433.7">s278</text><text x="287.3" y="473.4">s277</text><text x="287.4" y="513.2">s276</text><text x="287.5" y="552.9">s275</text><text x="287.6" y="592.7">s274</text><text x="287.7" y="632.5">s273</text><text x="287.8" y="672.2">s272</text><text x="287.9" y="712.0">s271</text><text x="326.9" y="354.2">s270</text><text x="327.0" y="394.0">s269</text><text x="327.1" y="433.7">s268</text><text x="327.2" y="473.5">s267</text><text x="327.2" y="513.2">s266</text><text x="327.4" y="553.0">s265</text><text x="327.5" y="592.8">s264</text><text x="327.6" y="632.5">s263</text><text x="327.7" y="672.3">s262</text><text x="327.8" y="712.1">s261</text><text x="366.7" y="354.3">s260</text><text x="366.8" y="394.0">s259</text><text x="366.9" y="433.8">s258</text><text x="367.0" y="473.6">s257</text><text x="367.1" y="513.3">s256</text><text x="367.2" y="553.1">s255</text><text x="367.3" y="592.8">s254</text><text x="367.4" y="632.6">s253</text><text x="367.5" y="672.4">s252</text><text x="367.6" y="712.1">s251</text><text x="406.6" y="354.4">s250</text><text x="406.7" y="394.1">s249</text><text x="406.8" y="433.9">s248</text><text x="406.9" y="473.6">s247</text><text x="406.9" y="513.4">s246</text><text x="407.1" y="553.1">s245</text><text x="407.2" y="592.9">s244</text><text x="407.2" y="632.7">s243</text><text x="407.4" y="672.4">s242</text><text x="407.4" y="712.2">s241</text><text x="446.4" y="354.4">s240</text><text x="446.5" y="394.2">s239</text><text x="446.6" y="433.9">s238</text><text x="446.7" y="473.7">s237</text><text x="446.8" y="513.5">s236</text><text x="446.9" y="553.2">s235</text><text x="447.0" y="593.0">s234</text><text x="447.1" y="632.7">s233</text><text x="447.2" y="672.5">s232</text><text x="447.3" y="712.3">s231</text><text x="486.2" y="354.5">s230</text><text x="486.4" y="394.2">s229</text><text x="486.4" y="434.0">s228</text><text x="486.6" y="473.8">s227</text><text x="486.6" y="513.5">s226</text><text x="486.8" y="553.3">s225</text><text x="486.9" y="593.1">s224</text><text x="486.9" y="632.8">s223</text><text x="487.1" y="672.6">s222</text><text x="487.1" y="712.3">s221</text><text x="526.1" y="354.6">s220</text><text x="526.2" y="394.3">s219</text><text x="526.3" y="434.1">s218</text><text x="526.4" y="473.8">s217</text><text x="526.5" y="513.6">s216</text><text x="526.6" y="553.4">s215</text><text x="526.7" y="593.1">s214</text><text x="526.8" y="632.9">s213</text><text x="526.9" y="672.6">s212</text><text x="527.0" y="712.4">s211</text><text x="566.0" y="354.6">s210</text><text x="566.1" y="394.4">s209</text><text x="566.2" y="434.1">s208</text><text x="566.2" y="473.9">s207</text><text x="566.4" y="513.7">s206</text><text x="566.5" y="553.4">s205</text><text x="566.6" y="593.2">s204</text><text x="566.7" y="633.0">s203</text><text x="566.8" y="672.7">s202</text><text x="566.9" y="712.5">s201</text><text x="605.8" y="354.7">s200</text><text x="605.9" y="394.5">s199</text><text x="606.0" y="434.2">s198</text><text x="606.1" y="474.0">s197</text><text x="606.2" y="513.7">s196</text><text x="606.3" y="553.5">s195</text><text x="606.4" y="593.3">s194</text><text x="606.5" y="633.0">s193</text><text x="606.6" y="672.8">s192</text><text x="606.7" y="712.5">s191</text><text x="645.7" y="354.8">s190</text><text x="645.8" y="394.5">s189</text><text x="645.9" y="434.3">s188</text><text x="646.0" y="474.0">s187</text><text x="646.1" y="513.8">s186</text><text x="646.2" y="553.6">s185</text><text x="646.3" y="593.3">s184</text><text x="646.4" y="633.1">s183</text><text x="646.5" y="672.9">s182</text><text x="646.6" y="712.6">s181</text><text x="685.5" y="354.8">s180</text><text x="685.6" y="394.6">s179</text><text x="685.7" y="434.4">s178</text><text x="685.8" y="474.1">s177</text><text x="685.9" y="513.9">s176</text><text x="686.0" y="553.6">s175</text><text x="686.1" y="593.4">s174</text><text x="686.2" y="633.2">s173</text><text x="686.3" y="672.9">s172</text><text x="686.4" y="712.7">s171</text><text x="725.4" y="354.9">s170</text><text x="725.5" y="394.7">s169</text><text x="725.6" y="434.4">s168</text><text x="725.7" y="474.2">s167</text><text x="725.8" y="514.0">s166</text><text x="725.9" y="553.7">s165</text><text x="726.0" y="593.5">s164</text><text x="726.1" y="633.2">s163</text><text x="726.2" y="673.0">s162</text><text x="726.3" y="712.8">s161</text><text x="765.2" y="355.0">s160</text><text x="765.3" y="394.7">s159</text><text x="765.4" y="434.5">s158</text><text x="765.5" y="474.3">s157</text><text x="765.6" y="514.0">s156</text><text x="765.7" y="553.8">s155</text><text x="765.8" y="593.5">s154</text><text x="765.9" y="633.3">s153</text><text x="766.0" y="673.1">s152</text><text x="766.1" y="712.8">s151</text><text x="805.0" y="355.1">s150</text><text x="805.1" y="394.8">s149</text><text x="805.2" y="434.6">s148</text><text x="805.3" y="474.3">s147</text><text x="805.4" y="514.1">s146</text><text x="805.5" y="553.8">s145</text><text x="805.6" y="593.6">s144</text><text x="805.8" y="633.4">s143</text><text x="805.8" y="673.1">s142</text><text x="805.9" y="712.9">s141</text><text x="844.9" y="355.1">s140</text><text x="845.0" y="394.9">s139</text><text x="845.1" y="434.6">s138</text><text x="845.2" y="474.4">s137</text><text x="845.3" y="514.2">s136</text><text x="845.4" y="553.9">s135</text><text x="845.5" y="593.7">s134</text><text x="845.6" y="633.4">s133</text><text x="845.7" y="673.2">s132</text><text x="845.8" y="713.0">s131</text><text x="884.8" y="355.2">s130</text><text x="884.9" y="394.9">s129</text><text x="885.0" y="434.7">s128</text><text x="885.0" y="474.5">s127</text><text x="885.1" y="514.2">s126</text><text x="885.2" y="554.0">s125</text><text x="885.4" y="593.8">s124</text><text x="885.5" y="633.5">s123</text><text x="885.5" y="673.3">s122</text><text x="885.6" y="713.0">s121</text><text x="924.6" y="355.3">s120</text><text x="924.7" y="395.0">s119</text><text x="924.8" y="434.8">s118</text><text x="924.9" y="474.5">s117</text><text x="925.0" y="514.3">s116</text><text x="925.1" y="554.1">s115</text><text x="925.2" y="593.8">s114</text><text x="925.3" y="633.6">s113</text><text x="925.4" y="673.3">s112</text><text x="925.5" y="713.1">s111</text><text x="964.5" y="355.3">s110</text><text x="964.6" y="395.1">s109</text><text x="964.7" y="434.8">s108</text><text x="964.8" y="474.6">s107</text><text x="964.9" y="514.4">s106</text><text x="965.0" y="554.1">s105</text><text x="965.1" y="593.9">s104</text><text x="965.2" y="633.7">s103</text><text x="965.2" y="673.4">s102</text><text x="965.4" y="713.2">s101</text><text x="1004.3" y="355.4">s100</text><text x="1004.4" y="395.2">s099</text><text x="1004.5" y="434.9">s098</text><text x="1004.6" y="474.7">s097</text><text x="1004.7" y="514.4">s096</text><text x="1004.8" y="554.2">s095</text><text x="1004.9" y="594.0">s094</text><text x="1005.0" y="633.7">s093</text><text x="1005.1" y="673.5">s092</text><text x="1005.2" y="713.2">s091</text><text x="1044.2" y="355.5">s090</text><text x="1044.2" y="395.2">s089</text><text x="1044.4" y="435.0">s088</text><text x="1044.5" y="474.8">s087</text><text x="1044.6" y="514.5">s086</text><text x="1044.7" y="554.3">s085</text><text x="1044.8" y="594.0">s084</text><text x="1044.9" y="633.8">s083</text><text x="1045.0" y="673.6">s082</text><text x="1045.1" y="713.3">s081</text><text x="1084.0" y="355.5">s080</text><text x="1084.1" y="395.3">s079</text><text x="1084.2" y="435.1">s078</text><text x="1084.3" y="474.8">s077</text><text x="1084.4" y="514.6">s076</text><text x="1084.5" y="554.3">s075</text><text x="1084.6" y="594.1">s074</text><text x="1084.7" y="633.9">s073</text><text x="1084.8" y="673.6">s072</text><text x="1084.9" y="713.4">s071</text><text x="1123.9" y="355.6">s070</text><text x="1124.0" y="395.4">s069</text><text x="1124.1" y="435.1">s068</text><text x="1124.2" y="474.9">s067</text><text x="1124.3" y="514.6">s066</text><text x="1124.4" y="554.4">s065</text><text x="1124.5" y="594.2">s064</text><text x="1124.6" y="633.9">s063</text><text x="1124.7" y="673.7">s062</text><text x="1124.8" y="713.5">s061</text><text x="1163.7" y="355.7">s060</text><text x="1163.8" y="395.4">s059</text><text x="1163.9" y="435.2">s058</text><text x="1164.0" y="475.0">s057</text><text x="1164.1" y="514.7">s056</text><text x="1164.2" y="554.5">s055</text><text x="1164.3" y="594.2">s054</text><text x="1164.4" y="634.0">s053</text><text x="1164.5" y="673.8">s052</text><text x="1164.6" y="713.5">s051</text><text x="1203.5" y="355.8">s050</text><text x="1203.6" y="395.5">s049</text><text x="1203.8" y="435.3">s048</text><text x="1203.8" y="475.0">s047</text><text x="1204.0" y="514.8">s046</text><text x="1204.0" y="554.5">s045</text><text x="1204.1" y="594.3">s044</text><text x="1204.2" y="634.1">s043</text><text x="1204.3" y="673.8">s042</text><text x="1204.5" y="713.6">s041</text><text x="1243.4" y="355.8">s040</text><text x="1243.5" y="395.6">s039</text><text x="1243.6" y="435.3">s038</text><text x="1243.7" y="475.1">s037</text><text x="1243.8" y="514.9">s036</text><text x="1243.9" y="554.6">s035</text><text x="1244.0" y="594.4">s034</text><text x="1244.1" y="634.1">s033</text><text x="1244.2" y="673.9">s032</text><text x="1244.3" y="713.7">s031</text><text x="1283.2" y="355.9">s030</text><text x="1283.3" y="395.6">s029</text><text x="1283.5" y="435.4">s028</text><text x="1283.5" y="475.2">s027</text><text x="1283.7" y="514.9">s026</text><text x="1283.8" y="554.7">s025</text><text x="1283.8" y="594.5">s024</text><text x="1284.0" y="634.2">s023</text><text x="1284.0" y="674.0">s022</text><text x="1284.2" y="713.7">s021</text><text x="1323.1" y="356.0">s020</text><text x="1323.2" y="395.7">s019</text><text x="1323.3" y="435.5">s018</text><text x="1323.4" y="475.2">s017</text><text x="1323.5" y="515.0">s016</text><text x="1323.6" y="554.8">s015</text><text x="1323.7" y="594.5">s014</text><text x="1323.8" y="634.3">s013</text><text x="1323.9" y="674.0">s012</text><text x="1324.0" y="713.8">s011</text><text x="1363.0" y="356.0">s010</text><text x="1363.0" y="395.8">s009</text><text x="1363.2" y="435.5">s008</text><text x="1363.2" y="475.3">s007</text><text x="1363.4" y="515.1">s006</text><text x="1363.5" y="554.8">s005</text><text x="1363.5" y="594.6">s004</text><text x="1363.7" y="634.4">s003</text><text x="1363.8" y="674.1">s002</text><text x="1363.9" y="713.9">s001</text></g><g><use href="#dr" x="207.3" y="340.6"/><use href="#dr" x="207.4" y="380.4"/><use href="#dr" x="207.5" y="420.1"/><use href="#dr" x="207.6" y="459.9"/><use href="#dr" x="207.7" y="499.6"/><use href="#dr" x="207.8" y="539.4"/><use href="#dr" x="207.9" y="579.2"/><use href="#dr" x="208.0" y="618.9"/><use href="#dr" x="208.1" y="658.7"/><use href="#dg" x="208.2" y="698.4"/><use href="#dr" x="247.2" y="340.7"/><use href="#dr" x="247.2" y="380.4"/><use href="#dr" x="247.3" y="420.2"/><use href="#dr" x="247.5" y="459.9"/><use href="#dr" x="247.6" y="499.7"/><use href="#dr" x="247.7" y="539.5"/><use href="#dr" x="247.8" y="579.2"/><use href="#dr" x="247.8" y="619.0"/><use href="#dr" x="248.0" y="658.8"/><use href="#dg" x="248.1" y="698.5"/><use href="#dr" x="287.0" y="340.7"/><use href="#dr" x="287.1" y="380.5"/><use href="#dr" x="287.2" y="420.3"/><use href="#dr" x="287.3" y="460.0"/><use href="#dr" x="287.4" y="499.8"/><use href="#dr" x="287.5" y="539.5"/><use href="#dr" x="287.6" y="579.3"/><use href="#dr" x="287.7" y="619.1"/><use href="#dr" x="287.8" y="658.8"/><use href="#dg" x="287.9" y="698.6"/><use href="#dr" x="326.9" y="340.8"/><use href="#dr" x="327.0" y="380.6"/><use href="#dr" x="327.1" y="420.3"/><use href="#dr" x="327.2" y="460.1"/><use href="#dr" x="327.2" y="499.8"/><use href="#dr" x="327.4" y="539.6"/><use href="#dr" x="327.5" y="579.4"/><use href="#dr" x="327.6" y="619.1"/><use href="#dr" x="327.7" y="658.9"/><use href="#dg" x="327.8" y="698.7"/><use href="#dr" x="366.7" y="340.9"/><use href="#dr" x="366.8" y="380.6"/><use href="#dr" x="366.9" y="420.4"/><use href="#dr" x="367.0" y="460.2"/><use href="#dr" x="367.1" y="499.9"/><use href="#dr" x="367.2" y="539.7"/><use href="#dr" x="367.3" y="579.4"/><use href="#dr" x="367.4" y="619.2"/><use href="#dr" x="367.5" y="659.0"/><use href="#dg" x="367.6" y="698.7"/><use href="#dr" x="406.6" y="341.0"/><use href="#dr" x="406.7" y="380.7"/><use href="#dr" x="406.8" y="420.5"/><use href="#dr" x="406.9" y="460.2"/><use href="#dr" x="406.9" y="500.0"/><use href="#dr" x="407.1" y="539.8"/><use href="#dr" x="407.2" y="579.5"/><use href="#dr" x="407.2" y="619.3"/><use href="#dr" x="407.4" y="659.0"/><use href="#dg" x="407.4" y="698.8"/><use href="#dr" x="446.4" y="341.0"/><use href="#dr" x="446.5" y="380.8"/><use href="#dr" x="446.6" y="420.5"/><use href="#dr" x="446.7" y="460.3"/><use href="#dr" x="446.8" y="500.1"/><use href="#dr" x="446.9" y="539.8"/><use href="#dr" x="447.0" y="579.6"/><use href="#dr" x="447.1" y="619.3"/><use href="#dr" x="447.2" y="659.1"/><use href="#dg" x="447.3" y="698.9"/><use href="#dr" x="486.2" y="341.1"/><use href="#dr" x="486.4" y="380.9"/><use href="#dr" x="486.4" y="420.6"/><use href="#dr" x="486.6" y="460.4"/><use href="#dr" x="486.6" y="500.1"/><use href="#dr" x="486.8" y="539.9"/><use href="#dr" x="486.9" y="579.7"/><use href="#dr" x="486.9" y="619.4"/><use href="#dr" x="487.1" y="659.2"/><use href="#dg" x="487.1" y="698.9"/><use href="#dr" x="526.1" y="341.2"/><use href="#dr" x="526.2" y="380.9"/><use href="#dr" x="526.3" y="420.7"/><use href="#dr" x="526.4" y="460.4"/><use href="#dr" x="526.5" y="500.2"/><use href="#dr" x="526.6" y="540.0"/><use href="#dr" x="526.7" y="579.7"/><use href="#dr" x="526.8" y="619.5"/><use href="#dr" x="526.9" y="659.2"/><use href="#dg" x="527.0" y="699.0"/><use href="#dr" x="566.0" y="341.2"/><use href="#dr" x="566.1" y="381.0"/><use href="#dr" x="566.2" y="420.8"/><use href="#dr" x="566.2" y="460.5"/><use href="#dr" x="566.4" y="500.3"/><use href="#dr" x="566.5" y="540.0"/><use href="#dr" x="566.6" y="579.8"/><use href="#dr" x="566.7" y="619.6"/><use href="#dr" x="566.8" y="659.3"/><use href="#dg" x="566.9" y="699.1"/><use href="#dr" x="605.8" y="341.3"/><use href="#dr" x="605.9" y="381.1"/><use href="#dr" x="606.0" y="420.8"/><use href="#dr" x="606.1" y="460.6"/><use href="#dr" x="606.2" y="500.3"/><use href="#dr" x="606.3" y="540.1"/><use href="#dr" x="606.4" y="579.9"/><use href="#dr" x="606.5" y="619.6"/><use href="#dr" x="606.6" y="659.4"/><use href="#dg" x="606.7" y="699.1"/><use href="#dr" x="645.7" y="341.4"/><use href="#dr" x="645.8" y="381.1"/><use href="#dr" x="645.9" y="420.9"/><use href="#dr" x="646.0" y="460.6"/><use href="#dr" x="646.1" y="500.4"/><use href="#dr" x="646.2" y="540.2"/><use href="#dr" x="646.3" y="579.9"/><use href="#dr" x="646.4" y="619.7"/><use href="#dr" x="646.5" y="659.5"/><use href="#dg" x="646.6" y="699.2"/><use href="#dr" x="685.5" y="341.4"/><use href="#dr" x="685.6" y="381.2"/><use href="#dr" x="685.7" y="421.0"/><use href="#dr" x="685.8" y="460.7"/><use href="#dr" x="685.9" y="500.5"/><use href="#dr" x="686.0" y="540.2"/><use href="#dr" x="686.1" y="580.0"/><use href="#dr" x="686.2" y="619.8"/><use href="#dr" x="686.3" y="659.5"/><use href="#dg" x="686.4" y="699.3"/><use href="#dr" x="725.4" y="341.5"/><use href="#dr" x="725.5" y="381.3"/><use href="#dr" x="725.6" y="421.0"/><use href="#dr" x="725.7" y="460.8"/><use href="#dr" x="725.8" y="500.6"/><use href="#dr" x="725.9" y="540.3"/><use href="#dr" x="726.0" y="580.1"/><use href="#dr" x="726.1" y="619.8"/><use href="#dr" x="726.2" y="659.6"/><use href="#dg" x="726.3" y="699.4"/><use href="#dr" x="765.2" y="341.6"/><use href="#dr" x="765.3" y="381.3"/><use href="#dr" x="765.4" y="421.1"/><use href="#dr" x="765.5" y="460.9"/><use href="#dr" x="765.6" y="500.6"/><use href="#dr" x="765.7" y="540.4"/><use href="#dr" x="765.8" y="580.1"/><use href="#dr" x="765.9" y="619.9"/><use href="#dr" x="766.0" y="659.7"/><use href="#dg" x="766.1" y="699.4"/><use href="#dr" x="805.0" y="341.7"/><use href="#dr" x="805.1" y="381.4"/><use href="#dr" x="805.2" y="421.2"/><use href="#dr" x="805.3" y="460.9"/><use href="#dr" x="805.4" y="500.7"/><use href="#dr" x="805.5" y="540.4"/><use href="#dr" x="805.6" y="580.2"/><use href="#dr" x="805.8" y="620.0"/><use href="#dr" x="805.8" y="659.7"/><use href="#dg" x="805.9" y="699.5"/><use href="#dr" x="844.9" y="341.7"/><use href="#dr" x="845.0" y="381.5"/><use href="#dr" x="845.1" y="421.2"/><use href="#dr" x="845.2" y="461.0"/><use href="#dr" x="845.3" y="500.8"/><use href="#dr" x="845.4" y="540.5"/><use href="#dr" x="845.5" y="580.3"/><use href="#dr" x="845.6" y="620.0"/><use href="#dr" x="845.7" y="659.8"/><use href="#dg" x="845.8" y="699.6"/><use href="#dr" x="884.8" y="341.8"/><use href="#dr" x="884.9" y="381.6"/><use href="#dr" x="885.0" y="421.3"/><use href="#dr" x="885.0" y="461.1"/><use href="#dr" x="885.1" y="500.8"/><use href="#dr" x="885.2" y="540.6"/><use href="#dr" x="885.4" y="580.4"/><use href="#dr" x="885.5" y="620.1"/><use href="#dr" x="885.5" y="659.9"/><use href="#dg" x="885.6" y="699.6"/><use href="#dr" x="924.6" y="341.9"/><use href="#dr" x="924.7" y="381.6"/><use href="#dr" x="924.8" y="421.4"/><use href="#dr" x="924.9" y="461.1"/><use href="#dr" x="925.0" y="500.9"/><use href="#dr" x="925.1" y="540.7"/><use href="#dr" x="925.2" y="580.4"/><use href="#dr" x="925.3" y="620.2"/><use href="#dr" x="925.4" y="659.9"/><use href="#dg" x="925.5" y="699.7"/><use href="#dr" x="964.5" y="341.9"/><use href="#dr" x="964.6" y="381.7"/><use href="#dr" x="964.7" y="421.4"/><use href="#dr" x="964.8" y="461.2"/><use href="#dr" x="964.9" y="501.0"/><use href="#dr" x="965.0" y="540.7"/><use href="#dr" x="965.1" y="580.5"/><use href="#dr" x="965.2" y="620.3"/><use href="#dr" x="965.2" y="660.0"/><use href="#dg" x="965.4" y="699.8"/><use href="#dr" x="1004.3" y="342.0"/><use href="#dr" x="1004.4" y="381.8"/><use href="#dr" x="1004.5" y="421.5"/><use href="#dr" x="1004.6" y="461.3"/><use href="#dr" x="1004.7" y="501.0"/><use href="#dr" x="1004.8" y="540.8"/><use href="#dr" x="1004.9" y="580.6"/><use href="#dr" x="1005.0" y="620.3"/><use href="#dr" x="1005.1" y="660.1"/><use href="#dg" x="1005.2" y="699.8"/><use href="#dr" x="1044.2" y="342.1"/><use href="#dr" x="1044.2" y="381.8"/><use href="#dr" x="1044.4" y="421.6"/><use href="#dr" x="1044.5" y="461.4"/><use href="#dr" x="1044.6" y="501.1"/><use href="#dr" x="1044.7" y="540.9"/><use href="#dr" x="1044.8" y="580.6"/><use href="#dr" x="1044.9" y="620.4"/><use href="#dr" x="1045.0" y="660.2"/><use href="#dg" x="1045.1" y="699.9"/><use href="#dr" x="1084.0" y="342.1"/><use href="#dr" x="1084.1" y="381.9"/><use href="#dr" x="1084.2" y="421.7"/><use href="#dr" x="1084.3" y="461.4"/><use href="#dr" x="1084.4" y="501.2"/><use href="#dr" x="1084.5" y="540.9"/><use href="#dr" x="1084.6" y="580.7"/><use href="#dr" x="1084.7" y="620.5"/><use href="#dr" x="1084.8" y="660.2"/><use href="#dg" x="1084.9" y="700.0"/><use href="#dr" x="1123.9" y="342.2"/><use href="#dr" x="1124.0" y="382.0"/><use href="#dr" x="1124.1" y="421.7"/><use href="#dr" x="1124.2" y="461.5"/><use href="#dr" x="1124.3" y="501.2"/><use href="#dr" x="1124.4" y="541.0"/><use href="#dr" x="1124.5" y="580.8"/><use href="#dr" x="1124.6" y="620.5"/><use href="#dr" x="1124.7" y="660.3"/><use href="#dg" x="1124.8" y="700.1"/><use href="#dr" x="1163.7" y="342.3"/><use href="#dr" x="1163.8" y="382.0"/><use href="#dr" x="1163.9" y="421.8"/><use href="#dr" x="1164.0" y="461.6"/><use href="#dr" x="1164.1" y="501.3"/><use href="#dr" x="1164.2" y="541.1"/><use href="#dr" x="1164.3" y="580.8"/><use href="#dr" x="1164.4" y="620.6"/><use href="#dr" x="1164.5" y="660.4"/><use href="#dg" x="1164.6" y="700.1"/><use href="#dr" x="1203.5" y="342.4"/><use href="#dr" x="1203.6" y="382.1"/><use href="#dr" x="1203.8" y="421.9"/><use href="#dr" x="1203.8" y="461.6"/><use href="#dr" x="1204.0" y="501.4"/><use href="#dr" x="1204.0" y="541.1"/><use href="#dr" x="1204.1" y="580.9"/><use href="#dr" x="1204.2" y="620.7"/><use href="#dr" x="1204.3" y="660.4"/><use href="#dg" x="1204.5" y="700.2"/><use href="#dr" x="1243.4" y="342.4"/><use href="#dr" x="1243.5" y="382.2"/><use href="#dr" x="1243.6" y="421.9"/><use href="#dr" x="1243.7" y="461.7"/><use href="#dr" x="1243.8" y="501.5"/><use href="#dr" x="1243.9" y="541.2"/><use href="#dr" x="1244.0" y="581.0"/><use href="#dr" x="1244.1" y="620.7"/><use href="#dr" x="1244.2" y="660.5"/><use href="#dg" x="1244.3" y="700.3"/><use href="#dr" x="1283.2" y="342.5"/><use href="#dr" x="1283.3" y="382.2"/><use href="#dr" x="1283.5" y="422.0"/><use href="#dr" x="1283.5" y="461.8"/><use href="#dr" x="1283.7" y="501.5"/><use href="#dr" x="1283.8" y="541.3"/><use href="#dr" x="1283.8" y="581.1"/><use href="#dr" x="1284.0" y="620.8"/><use href="#dr" x="1284.0" y="660.6"/><use href="#dg" x="1284.2" y="700.3"/><use href="#dr" x="1323.1" y="342.6"/><use href="#dr" x="1323.2" y="382.3"/><use href="#dr" x="1323.3" y="422.1"/><use href="#dr" x="1323.4" y="461.8"/><use href="#dr" x="1323.5" y="501.6"/><use href="#dr" x="1323.6" y="541.4"/><use href="#dr" x="1323.7" y="581.1"/><use href="#dr" x="1323.8" y="620.9"/><use href="#dr" x="1323.9" y="660.6"/><use href="#dg" x="1324.0" y="700.4"/><use href="#dr" x="1363.0" y="342.6"/><use href="#dr" x="1363.0" y="382.4"/><use href="#dr" x="1363.2" y="422.1"/><use href="#dr" x="1363.2" y="461.9"/><use href="#dr" x="1363.4" y="501.7"/><use href="#dr" x="1363.5" y="541.4"/><use href="#dr" x="1363.5" y="581.2"/><use href="#dr" x="1363.7" y="621.0"/><use href="#dr" x="1363.8" y="660.7"/><use href="#dg" x="1363.9" y="700.5"/></g><g font-size="11" text-anchor="middle" fill="#1c1c1c"><text x="207.3" y="366.8">299</text><text x="207.4" y="406.6">298</text><text x="207.5" y="446.3">297</text><text x="207.6" y="486.1">296</text><text x="207.7" y="525.8">295</text><text x="207.8" y="565.6">294</text><text x="207.9" y="605.4">293</text><text x="208.0" y="645.1">292</text><text x="208.1" y="684.9">291</text><text x="208.2" y="724.6">290</text><text x="247.2" y="366.9">289</text><text x="247.2" y="406.6">288</text><text x="247.3" y="446.4">287</text><text x="247.5" y="486.1">286</text><text x="247.6" y="525.9">285</text><text x="247.7" y="565.7">284</text><text x="247.8" y="605.4">283</text><text x="247.8" y="645.2">282</text><text x="248.0" y="685.0">281</text><text x="248.1" y="724.7">280</text><text x="287.0" y="366.9">279</text><text x="287.1" y="406.7">278</text><text x="287.2" y="446.5">277</text><text x="287.3" y="486.2">276</text><text x="287.4" y="526.0">275</text><text x="287.5" y="565.7">274</text><text x="287.6" y="605.5">273</text><text x="287.7" y="645.3">272</text><text x="287.8" y="685.0">271</text><text x="287.9" y="724.8">270</text><text x="326.9" y="367.0">269</text><text x="327.0" y="406.8">268</text><text x="327.1" y="446.5">267</text><text x="327.2" y="486.3">266</text><text x="327.2" y="526.0">265</text><text x="327.4" y="565.8">264</text><text x="327.5" y="605.6">263</text><text x="327.6" y="645.3">262</text><text x="327.7" y="685.1">261</text><text x="327.8" y="724.9">260</text><text x="366.7" y="367.1">259</text><text x="366.8" y="406.8">258</text><text x="366.9" y="446.6">257</text><text x="367.0" y="486.4">256</text><text x="367.1" y="526.1">255</text><text x="367.2" y="565.9">254</text><text x="367.3" y="605.6">253</text><text x="367.4" y="645.4">252</text><text x="367.5" y="685.2">251</text><text x="367.6" y="724.9">250</text><text x="406.6" y="367.2">249</text><text x="406.7" y="406.9">248</text><text x="406.8" y="446.7">247</text><text x="406.9" y="486.4">246</text><text x="406.9" y="526.2">245</text><text x="407.1" y="566.0">244</text><text x="407.2" y="605.7">243</text><text x="407.2" y="645.5">242</text><text x="407.4" y="685.2">241</text><text x="407.4" y="725.0">240</text><text x="446.4" y="367.2">239</text><text x="446.5" y="407.0">238</text><text x="446.6" y="446.7">237</text><text x="446.7" y="486.5">236</text><text x="446.8" y="526.3">235</text><text x="446.9" y="566.0">234</text><text x="447.0" y="605.8">233</text><text x="447.1" y="645.5">232</text><text x="447.2" y="685.3">231</text><text x="447.3" y="725.1">230</text><text x="486.2" y="367.3">229</text><text x="486.4" y="407.1">228</text><text x="486.4" y="446.8">227</text><text x="486.6" y="486.6">226</text><text x="486.6" y="526.3">225</text><text x="486.8" y="566.1">224</text><text x="486.9" y="605.9">223</text><text x="486.9" y="645.6">222</text><text x="487.1" y="685.4">221</text><text x="487.1" y="725.1">220</text><text x="526.1" y="367.4">219</text><text x="526.2" y="407.1">218</text><text x="526.3" y="446.9">217</text><text x="526.4" y="486.6">216</text><text x="526.5" y="526.4">215</text><text x="526.6" y="566.2">214</text><text x="526.7" y="605.9">213</text><text x="526.8" y="645.7">212</text><text x="526.9" y="685.4">211</text><text x="527.0" y="725.2">210</text><text x="566.0" y="367.4">209</text><text x="566.1" y="407.2">208</text><text x="566.2" y="446.9">207</text><text x="566.2" y="486.7">206</text><text x="566.4" y="526.5">205</text><text x="566.5" y="566.2">204</text><text x="566.6" y="606.0">203</text><text x="566.7" y="645.8">202</text><text x="566.8" y="685.5">201</text><text x="566.9" y="725.3">200</text><text x="605.8" y="367.5">199</text><text x="605.9" y="407.3">198</text><text x="606.0" y="447.0">197</text><text x="606.1" y="486.8">196</text><text x="606.2" y="526.5">195</text><text x="606.3" y="566.3">194</text><text x="606.4" y="606.1">193</text><text x="606.5" y="645.8">192</text><text x="606.6" y="685.6">191</text><text x="606.7" y="725.3">190</text><text x="645.7" y="367.6">189</text><text x="645.8" y="407.3">188</text><text x="645.9" y="447.1">187</text><text x="646.0" y="486.8">186</text><text x="646.1" y="526.6">185</text><text x="646.2" y="566.4">184</text><text x="646.3" y="606.1">183</text><text x="646.4" y="645.9">182</text><text x="646.5" y="685.7">181</text><text x="646.6" y="725.4">180</text><text x="685.5" y="367.6">179</text><text x="685.6" y="407.4">178</text><text x="685.7" y="447.2">177</text><text x="685.8" y="486.9">176</text><text x="685.9" y="526.7">175</text><text x="686.0" y="566.4">174</text><text x="686.1" y="606.2">173</text><text x="686.2" y="646.0">172</text><text x="686.3" y="685.7">171</text><text x="686.4" y="725.5">170</text><text x="725.4" y="367.7">169</text><text x="725.5" y="407.5">168</text><text x="725.6" y="447.2">167</text><text x="725.7" y="487.0">166</text><text x="725.8" y="526.8">165</text><text x="725.9" y="566.5">164</text><text x="726.0" y="606.3">163</text><text x="726.1" y="646.0">162</text><text x="726.2" y="685.8">161</text><text x="726.3" y="725.6">160</text><text x="765.2" y="367.8">159</text><text x="765.3" y="407.5">158</text><text x="765.4" y="447.3">157</text><text x="765.5" y="487.1">156</text><text x="765.6" y="526.8">155</text><text x="765.7" y="566.6">154</text><text x="765.8" y="606.3">153</text><text x="765.9" y="646.1">152</text><text x="766.0" y="685.9">151</text><text x="766.1" y="725.6">150</text><text x="805.0" y="367.9">149</text><text x="805.1" y="407.6">148</text><text x="805.2" y="447.4">147</text><text x="805.3" y="487.1">146</text><text x="805.4" y="526.9">145</text><text x="805.5" y="566.6">144</text><text x="805.6" y="606.4">143</text><text x="805.8" y="646.2">142</text><text x="805.8" y="685.9">141</text><text x="805.9" y="725.7">140</text><text x="844.9" y="367.9">139</text><text x="845.0" y="407.7">138</text><text x="845.1" y="447.4">137</text><text x="845.2" y="487.2">136</text><text x="845.3" y="527.0">135</text><text x="845.4" y="566.7">134</text><text x="845.5" y="606.5">133</text><text x="845.6" y="646.2">132</text><text x="845.7" y="686.0">131</text><text x="845.8" y="725.8">130</text><text x="884.8" y="368.0">129</text><text x="884.9" y="407.8">128</text><text x="885.0" y="447.5">127</text><text x="885.0" y="487.3">126</text><text x="885.1" y="527.0">125</text><text x="885.2" y="566.8">124</text><text x="885.4" y="606.6">123</text><text x="885.5" y="646.3">122</text><text x="885.5" y="686.1">121</text><text x="885.6" y="725.8">120</text><text x="924.6" y="368.1">119</text><text x="924.7" y="407.8">118</text><text x="924.8" y="447.6">117</text><text x="924.9" y="487.3">116</text><text x="925.0" y="527.1">115</text><text x="925.1" y="566.9">114</text><text x="925.2" y="606.6">113</text><text x="925.3" y="646.4">112</text><text x="925.4" y="686.1">111</text><text x="925.5" y="725.9">110</text><text x="964.5" y="368.1">109</text><text x="964.6" y="407.9">108</text><text x="964.7" y="447.6">107</text><text x="964.8" y="487.4">106</text><text x="964.9" y="527.2">105</text><text x="965.0" y="566.9">104</text><text x="965.1" y="606.7">103</text><text x="965.2" y="646.5">102</text><text x="965.2" y="686.2">101</text><text x="965.4" y="726.0">100</text><text x="1004.3" y="368.2">099</text><text x="1004.4" y="408.0">098</text><text x="1004.5" y="447.7">097</text><text x="1004.6" y="487.5">096</text><text x="1004.7" y="527.2">095</text><text x="1004.8" y="567.0">094</text><text x="1004.9" y="606.8">093</text><text x="1005.0" y="646.5">092</text><text x="1005.1" y="686.3">091</text><text x="1005.2" y="726.0">090</text><text x="1044.2" y="368.3">089</text><text x="1044.2" y="408.0">088</text><text x="1044.4" y="447.8">087</text><text x="1044.5" y="487.6">086</text><text x="1044.6" y="527.3">085</text><text x="1044.7" y="567.1">084</text><text x="1044.8" y="606.8">083</text><text x="1044.9" y="646.6">082</text><text x="1045.0" y="686.4">081</text><text x="1045.1" y="726.1">080</text><text x="1084.0" y="368.3">079</text><text x="1084.1" y="408.1">078</text><text x="1084.2" y="447.9">077</text><text x="1084.3" y="487.6">076</text><text x="1084.4" y="527.4">075</text><text x="1084.5" y="567.1">074</text><text x="1084.6" y="606.9">073</text><text x="1084.7" y="646.7">072</text><text x="1084.8" y="686.4">071</text><text x="1084.9" y="726.2">070</text><text x="1123.9" y="368.4">069</text><text x="1124.0" y="408.2">068</text><text x="1124.1" y="447.9">067</text><text x="1124.2" y="487.7">066</text><text x="1124.3" y="527.5">065</text><text x="1124.4" y="567.2">064</text><text x="1124.5" y="607.0">063</text><text x="1124.6" y="646.7">062</text><text x="1124.7" y="686.5">061</text><text x="1124.8" y="726.3">060</text><text x="1163.7" y="368.5">059</text><text x="1163.8" y="408.2">058</text><text x="1163.9" y="448.0">057</text><text x="1164.0" y="487.8">056</text><text x="1164.1" y="527.5">055</text><text x="1164.2" y="567.3">054</text><text x="1164.3" y="607.0">053</text><text x="1164.4" y="646.8">052</text><text x="1164.5" y="686.6">051</text><text x="1164.6" y="726.3">050</text><text x="1203.5" y="368.6">049</text><text x="1203.6" y="408.3">048</text><text x="1203.8" y="448.1">047</text><text x="1203.8" y="487.8">046</text><text x="1204.0" y="527.6">045</text><text x="1204.0" y="567.4">044</text><text x="1204.1" y="607.1">043</text><text x="1204.2" y="646.9">042</text><text x="1204.3" y="686.6">041</text><text x="1204.5" y="726.4">040</text><text x="1243.4" y="368.6">039</text><text x="1243.5" y="408.4">038</text><text x="1243.6" y="448.1">037</text><text x="1243.7" y="487.9">036</text><text x="1243.8" y="527.7">035</text><text x="1243.9" y="567.4">034</text><text x="1244.0" y="607.2">033</text><text x="1244.1" y="646.9">032</text><text x="1244.2" y="686.7">031</text><text x="1244.3" y="726.5">030</text><text x="1283.2" y="368.7">029</text><text x="1283.3" y="408.4">028</text><text x="1283.5" y="448.2">027</text><text x="1283.5" y="488.0">026</text><text x="1283.7" y="527.7">025</text><text x="1283.8" y="567.5">024</text><text x="1283.8" y="607.3">023</text><text x="1284.0" y="647.0">022</text><text x="1284.0" y="686.8">021</text><text x="1284.2" y="726.5">020</text><text x="1323.1" y="368.8">019</text><text x="1323.2" y="408.5">018</text><text x="1323.3" y="448.3">017</text><text x="1323.4" y="488.0">016</text><text x="1323.5" y="527.8">015</text><text x="1323.6" y="567.6">014</text><text x="1323.7" y="607.3">013</text><text x="1323.8" y="647.1">012</text><text x="1323.9" y="686.8">011</text><text x="1324.0" y="726.6">010</text><text x="1363.0" y="368.8">009</text><text x="1363.0" y="408.6">008</text><text x="1363.2" y="448.3">007</text><text x="1363.2" y="488.1">006</text><text x="1363.4" y="527.9">005</text><text x="1363.5" y="567.6">004</text><text x="1363.5" y="607.4">003</text><text x="1363.7" y="647.2">002</text><text x="1363.8" y="686.9">001</text><text x="1363.9" y="726.7">000</text></g><circle cx="1371" cy="751.800" r="7.700" fill="#ff4040" stroke="#fff" stroke-width="1.800"/><g font-size="12.500" font-weight="bold" font-style="italic" fill="#fff" stroke="#111" stroke-width="2.600" paint-order="stroke" stroke-linejoin="round" ><text x="1481.500" y="714.500" text-anchor="end" letter-spacing="-.35">47.486°</text><text x="1482.500" y="1036" text-anchor="end" font-style="normal" letter-spacing="-.6">18.91</text></g></svg>
<div class="a" style="left:8px;top:8px;width:24px;height:47px;background:#fff;box-shadow:0 1px 3px rgba(0,0,0,.3),0 1px 2px rgba(0,0,0,.2);border-radius:1px;"></div>
<div class="t" style="left:8px;top:10.0px;width:24px;text-align:center;font-size:16px;font-weight:bold;color:#111">+</div>
<div class="a" style="left:16px;top:42.5px;width:8px;height:2px;background:#111"></div>
<div class="a" style="left:41px;top:8.5px;width:184px;height:48px;background:#fff;box-shadow:0 1px 3px rgba(0,0,0,.3),0 1px 2px rgba(0,0,0,.2);border-radius:4px;"></div>
<div class="a" style="left:176.5px;top:8.5px;width:1px;height:48px;background:#ddd"></div>
<svg class="ic" style="left:54px;top:21px" width="22" height="22" viewBox="0 0 24 24" fill="#757575" opacity="1"><path d="M7.110 8.530L5.700 7.110C4.800 8.270 4.240 9.610 4.070 11h2.020c.14-.87.49-1.720 1.020-2.470zM6.090 13H4.070c.17 1.390.72 2.730 1.620 3.890l1.410-1.420c-.52-.75-.87-1.590-1.010-2.470zm1.010 5.320c1.160.9 2.510 1.440 3.900 1.610V17.900c-.87-.15-1.710-.49-2.460-1.030L7.100 18.320zM13 4.070V1L8.450 5.550 13 10V6.090c2.840.48 5 2.940 5 5.910s-2.160 5.430-5 5.910v2.020c3.950-.49 7-3.850 7-7.930s-3.050-7.440-7-7.930z"/></svg>
<div class="t" style="left:89px;top:20.66px;font-size:16px;color:#333;letter-spacing:-.9px">59,0</div>
<div class="a" style="left:89px;top:44.5px;width:75px;height:1px;background:#8a8a8a"></div>
<svg class="ic" style="left:190px;top:21.5px" width="22" height="22" viewBox="0 0 24 24" ><circle cx="12" cy="12" r="6.500" fill="none" stroke="#757575" stroke-width="2"/><path d="M3 3h5.500L3 8.500zM21 3h-5.500L21 8.500zM3 21h5.500L3 15.500zM21 21h-5.500L21 15.500z" fill="#757575"/></svg>
<div class="a" style="left:9px;top:64.5px;width:48px;height:433px;background:#fff;box-shadow:0 1px 3px rgba(0,0,0,.3),0 1px 2px rgba(0,0,0,.2);border-radius:4px;"></div>
<div class="a" style="left:9px;top:160.5px;width:48px;height:1px;background:#ddd"></div>
<svg class="ic" style="left:22px;top:77.5px" width="22" height="22" viewBox="0 0 24 24" ><rect x="3" y="3" width="18" height="18" fill="none" stroke="#1e88e5" stroke-width="2" stroke-dasharray="2 2"/><rect x="8" y="8" width="8" height="8" fill="none" stroke="#1e88e5" stroke-width="2"/></svg>
<svg class="ic" style="left:22px;top:125.5px" width="22" height="22" viewBox="0 0 24 24" fill="#757575" opacity="1"><path d="M15.500 14h-.79l-.28-.27C15.410 12.590 16 11.110 16 9.500 16 5.910 13.090 3 9.500 3S3 5.910 3 9.500 5.910 16 9.500 16c1.610 0 3.090-.59 4.230-1.570l.27.28v.79l5 4.990L20.490 19l-4.990-5zm-6 0C7.010 14 5 11.990 5 9.500S7.010 5 9.500 5 14 7.010 14 9.500 11.990 14 9.500 14zm2.500-4h-2v2H9v-2H7V9h2V7h1v2h2v1z"/></svg>
<div class="a" style="left:25px;top:177.5px;width:16px;height:16px;border-radius:50%;background:#757575"></div>
<svg class="ic" style="left:21.5px;top:222px" width="23" height="23" viewBox="0 0 24 24" fill="#757575" opacity="1"><path d="M3.500 18.490l6-6.010 4 4L22 6.920l-1.410-1.410-7.090 7.970-4-4L2 16.990z"/></svg>
<svg class="ic" style="left:21px;top:269.5px" width="24" height="24" viewBox="0 0 24 24" fill="#757575" opacity="1"><path d="M12 2C6.470 2 2 6.470 2 12s4.470 10 10 10 10-4.470 10-10S17.530 2 12 2zm0 18c-4.410 0-8-3.590-8-8s3.590-8 8-8 8 3.590 8 8-3.590 8-8 8z"/></svg>
<svg class="ic" style="left:21.5px;top:318px" width="23" height="23" viewBox="0 0 24 24" fill="#757575" opacity="1"><path d="M18 4H6c-1.100 0-2 .9-2 2v12c0 1.100.9 2 2 2h12c1.100 0 2-.9 2-2V6c0-1.100-.9-2-2-2zm0 14H6V6h12v12z"/></svg>
<svg class="ic" style="left:21.5px;top:366px" width="23" height="23" viewBox="0 0 24 24" fill="#757575" opacity="1"><path d="M22 9.240l-7.190-.62L12 2 9.190 8.630 2 9.240l5.460 4.730L5.820 21 12 17.270 18.180 21l-1.630-7.030L22 9.240zM12 15.400l-3.760 2.270 1-4.280-3.320-2.880 4.380-.38L12 6.100l1.710 4.040 4.380.38-3.320 2.880 1 4.280L12 15.400z"/></svg>
<svg class="ic" style="left:21.5px;top:414px" width="23" height="23" viewBox="0 0 24 24" fill="#757575" opacity="1"><path d="M9.640 7.640c.23-.5.36-1.050.36-1.640 0-2.210-1.790-4-4-4S2 3.790 2 6s1.790 4 4 4c.59 0 1.140-.13 1.640-.36L10 12l-2.360 2.360C7.140 14.130 6.590 14 6 14c-2.210 0-4 1.790-4 4s1.790 4 4 4 4-1.790 4-4c0-.59-.13-1.140-.36-1.640L12 14l7 7h3v-1L9.640 7.640zM6 8c-1.100 0-2-.89-2-2s.9-2 2-2 2 .89 2 2-.9 2-2 2zm0 12c-1.100 0-2-.89-2-2s.9-2 2-2 2 .89 2 2-.9 2-2 2zm6-7.500c-.28 0-.5-.22-.5-.5s.22-.5.5-.5.500.22.500.5-.22.500-.5.500zM19 3l-6 6 2 2 7-7V3h-3z"/></svg>
<svg class="ic" style="left:21px;top:461.5px" width="24" height="24" viewBox="0 0 24 24" ><path d="M3.500 4.500L20 13l-5 7.500z" fill="#757575"/></svg>
<div class="a" style="left:9px;top:891.5px;width:24px;height:24px;background:#fff;box-shadow:0 1px 3px rgba(0,0,0,.3),0 1px 2px rgba(0,0,0,.2);"></div>
<div class="t" style="left:9px;top:895.5px;width:24px;text-align:center;font-size:14px;font-weight:bold;color:#3a0a3a">i</div>
<div class="a" style="left:10px;top:923.0px;width:131px;height:14px;background:#fff;border:1px solid #222;border-top:none;box-sizing:content-box;box-shadow:0 1px 3px rgba(0,0,0,.3)"></div>
<div class="t" style="left:10px;top:925.0px;width:133px;text-align:center;font-size:10.500px;color:#555">10 m</div>
</div>
<div class="a" style="left:1490px;top:71px;width:430px;height:20px;background:#f3f3f3;border-top:1px solid #fafafa;box-sizing:border-box"></div>
<div class="tab on" style="left:1490px;top:72px;width:84.5px"><span style="left:9.5px">Clocks</span></div>
<svg class="ic" style="left:1543px;top:77px" width="10" height="10" viewBox="0 0 10 10" fill="none" stroke="#8a8a8a" stroke-width="1"><rect x=".5" y="3.500" width="6" height="6"/><path d="M3.500 3.500v-3h6v6h-3"/></svg>
<svg class="ic" style="left:1558.5px;top:78px" width="8" height="8" viewBox="0 0 8 8" fill="none" stroke="#000" stroke-width="1"><path d="M0 0l8 8M8 0l-8 8"/></svg>
<div class="tab" style="left:1577px;top:72px;width:87.5px"><span style="left:10px">Locations</span></div>
<svg class="ic" style="left:1648.5px;top:78px" width="8" height="8" viewBox="0 0 8 8" fill="none" stroke="#8a8a8a" stroke-width="1"><path d="M0 0l8 8M8 0l-8 8"/></svg>
<div class="tab" style="left:1667px;top:72px;width:72px"><span style="left:10px">Layers</span></div>
<svg class="ic" style="left:1723.5px;top:78px" width="8" height="8" viewBox="0 0 8 8" fill="none" stroke="#8a8a8a" stroke-width="1"><path d="M0 0l8 8M8 0l-8 8"/></svg>
<svg class="ic" style="left:1886px;top:76px" width="9" height="9" viewBox="0 0 9 9" fill="none" stroke="#777"><rect x=".5" y="1" width="8" height="7.500"/><path d="M.5 1h8" stroke-width="2"/></svg>
<svg class="ic" style="left:1904px;top:76px" width="9" height="9" viewBox="0 0 9 9" fill="none" stroke="#888" stroke-width=".9"><path d="M0 0l9 9M9 0l-9 9"/></svg>
<div class="a" style="left:1490px;top:91px;width:430px;height:197px;background:#f4f4f4"></div>
<div class="a" style="left:1490px;top:92px;width:428.600px;height:95.5px;background:#93af6a;box-shadow:inset 0 0 6px 1px rgba(0,0,0,.45),inset 0 0 1px 1px rgba(0,0,0,.35)"></div>
<svg class="ic" style="left:1490px;top:92px;mix-blend-mode:multiply;opacity:.22;overflow:hidden" width="428" height="95.5"><filter id="n92" x="0" y="0" width="100%" height="100%"><feTurbulence type="fractalNoise" baseFrequency=".9" numOctaves="2" seed="92"/><feColorMatrix type="saturate" values="0"/></filter><rect width="428" height="95.5" filter="url(#n92)"/></svg>
<div class="t " style="left:1498.7px;top:99.83px;font-size:10px;color:#111;font-weight:bold;">+</div>
<div class="t " style="left:1653.3px;top:98.37px;font-size:13.5px;color:#74894f;text-shadow:0 0 1px #74894f;transform-origin:0 50%;transform:scaleX(0.8557);">END</div>
<div class="t " style="left:1686.8px;top:98.37px;font-size:13.5px;color:#141414;text-shadow:0 0 1px #141414;transform-origin:0 50%;transform:scaleX(0.8976);">SHOW</div>
<div class="t " style="left:1732.9px;top:98.37px;font-size:13.5px;color:#74894f;text-shadow:0 0 1px #74894f;transform-origin:0 50%;transform:scaleX(0.8577);">SRV</div>
<div class="a" style="left:1902px;top:98.5px;width:10px;height:10px;border-radius:50%;background:#000"></div>
<div class="lcd" style="left:1582.400px;top:118.8px"><span class="d">0</span><span class="d">0</span><span class="c">:</span><span class="d">0</span><span class="d">0</span><span class="c">:</span><span class="d">0</span><span class="d">0</span><span class="p">.</span><span class="d">0</span></div>
<div class="a" style="left:1490px;top:192.2px;width:428.600px;height:95.5px;background:#ee9129;box-shadow:inset 0 0 6px 1px rgba(0,0,0,.45),inset 0 0 1px 1px rgba(0,0,0,.35)"></div>
<svg class="ic" style="left:1490px;top:192.2px;mix-blend-mode:multiply;opacity:.22;overflow:hidden" width="428" height="95.5"><filter id="n192.2" x="0" y="0" width="100%" height="100%"><feTurbulence type="fractalNoise" baseFrequency=".9" numOctaves="2" seed="192.2"/><feColorMatrix type="saturate" values="0"/></filter><rect width="428" height="95.5" filter="url(#n192.2)"/></svg>
<div class="t " style="left:1498.7px;top:199.00px;font-size:13px;color:#111;font-weight:normal;">X</div>
<div class="t " style="left:1653.3px;top:198.57px;font-size:13.5px;color:#141414;text-shadow:0 0 1px #141414;transform-origin:0 50%;transform:scaleX(0.8557);">END</div>
<div class="t " style="left:1686.8px;top:198.57px;font-size:13.5px;color:#bd711d;text-shadow:0 0 1px #bd711d;transform-origin:0 50%;transform:scaleX(0.8976);">SHOW</div>
<div class="t " style="left:1732.9px;top:198.57px;font-size:13.5px;color:#bd711d;text-shadow:0 0 1px #bd711d;transform-origin:0 50%;transform:scaleX(0.8577);">SRV</div>
<div class="a" style="left:1902px;top:198.7px;width:10px;height:10px;border-radius:50%;background:#000"></div>
<div class="lcd" style="left:1582.400px;top:219.0px"><span class="d">0</span><span class="d">0</span><span class="c">:</span><span class="d">0</span><span class="d">0</span><span class="c">:</span><span class="d">0</span><span class="d">0</span><span class="p">.</span><span class="d">0</span></div>
<div class="a" style="left:1490px;top:294px;width:430px;height:20px;background:#f3f3f3;border-top:1px solid #fafafa;box-sizing:border-box"></div>
<div class="tab on" style="left:1490px;top:295px;width:117px"><span style="left:9.5px">Show control</span></div>
<svg class="ic" style="left:1575.5px;top:300px" width="10" height="10" viewBox="0 0 10 10" fill="none" stroke="#8a8a8a" stroke-width="1"><rect x=".5" y="3.500" width="6" height="6"/><path d="M3.500 3.500v-3h6v6h-3"/></svg>
<svg class="ic" style="left:1591.5px;top:301px" width="8" height="8" viewBox="0 0 8 8" fill="none" stroke="#000" stroke-width="1"><path d="M0 0l8 8M8 0l-8 8"/></svg>
<svg class="ic" style="left:1886px;top:299px" width="9" height="9" viewBox="0 0 9 9" fill="none" stroke="#777"><rect x=".5" y="1" width="8" height="7.500"/><path d="M.5 1h8" stroke-width="2"/></svg>
<svg class="ic" style="left:1904px;top:299px" width="9" height="9" viewBox="0 0 9 9" fill="none" stroke="#888" stroke-width=".9"><path d="M0 0l9 9M9 0l-9 9"/></svg>
<div class="a" style="left:1489.500px;top:314px;width:430.500px;height:725px;background:#fff;border-left:1px solid #d0d0d0;border-right:1px solid #c8c8c8;border-bottom:1px solid #c8c8c8;border-top:1px solid #d8d8d8;box-sizing:border-box"></div>
<div class="dot" style="left:1506px;top:346px;background:#00c853"></div>
<div class="t p1" style="left:1536px;top:334.75px;font-size:14px;letter-spacing:0.042px;">Show with 300 drones</div>
<div class="t p2" style="left:1536px;top:354.65px;font-size:14px;letter-spacing:-0.249px;">300 drones, 5:04, max AHL 169.3 m, spacing 3.0 m</div>
<div class="dot" style="left:1506px;top:407px;background:#00c853"></div>
<div class="t p1" style="left:1536px;top:395.75px;font-size:14px;letter-spacing:0.216px;">Setup environment</div>
<div class="t p2" style="left:1536px;top:415.65px;font-size:14px;letter-spacing:-0.085px;">Outdoor, relative to 130.0m AMSL</div>
<div class="dot" style="left:1506px;top:469px;background:#0d9df0"></div>
<div class="t p1" style="left:1536px;top:457.75px;font-size:14px;letter-spacing:0.102px;">Adapt show to venue</div>
<div class="t p2" style="left:1536px;top:480.35px;font-size:14px;letter-spacing:0.229px;">Adjust takeoff grid and show layout if needed</div>
<div class="dot" style="left:1506px;top:531px;background:#00c853"></div>
<div class="t p1" style="left:1536px;top:519.75px;font-size:14px;letter-spacing:0.016px;">Assign drones to show</div>
<div class="t p2" style="left:1536px;top:539.65px;font-size:14px;letter-spacing:-0.147px;">Placement accuracy ≤ 0.63 cm</div>
<div class="dot" style="left:1506px;top:591px;background:#0d9df0"></div>
<div class="t p1" style="left:1536px;top:579.75px;font-size:14px;letter-spacing:-0.035px;">Setup geofence</div>
<div class="t p2" style="left:1536px;top:599.65px;font-size:14px;letter-spacing:0.083px;">No geofence defined yet</div>
<div class="dot" style="left:1506px;top:651px;background:#0d9df0"></div>
<div class="t p1" style="left:1536px;top:639.75px;font-size:14px;letter-spacing:0.120px;">Upload show data</div>
<div class="t p2" style="left:1536px;top:659.65px;font-size:14px;letter-spacing:0.141px;">Click here to start the upload process</div>
<div class="dot" style="left:1506px;top:699.5px;background:#b0b0b0"></div>
<div class="t p1" style="left:1536px;top:698.85px;font-size:14px;color:#9e9e9e;letter-spacing:0.144px;">Onboard preflight checks</div>
<div class="dot" style="left:1506px;top:735.5px;background:#b0b0b0"></div>
<div class="t p1" style="left:1536px;top:734.85px;font-size:14px;color:#9e9e9e;letter-spacing:0.140px;">Manual preflight checks</div>
<div class="dot" style="left:1506px;top:785px;background:#5a5a5a"></div>
<div class="t p1" style="left:1536px;top:773.75px;font-size:14px;letter-spacing:0.099px;">Choose start time</div>
<div class="t p2" style="left:1536px;top:793.65px;font-size:14px;letter-spacing:0.143px;">Not set yet</div>
<div class="a" style="left:1679px;top:458px;width:20px;height:15.700px;border-radius:2.500px;background:#161616"></div>
<div class="t w" style="left:1680.7px;top:462.00px;font-size:8.5px;font-weight:bold;letter-spacing:-0.674px;">PRO</div>
<svg class="ic" style="left:1879px;top:341px" width="24" height="24" viewBox="0 0 24 24" fill="#444" opacity="1"><path d="M19 6.410L17.590 5 12 10.590 6.410 5 5 6.410 10.590 12 5 17.590 6.410 19 12 13.410 17.590 19 19 17.590 13.410 12z"/></svg>
<div class="a" style="left:1490.500px;top:383px;width:428.500px;height:1px;background:#dcdcdc"></div>
<div class="a" style="left:1490.500px;top:688px;width:428.500px;height:1px;background:#dcdcdc"></div>
<div class="a" style="left:1490.500px;top:761.5px;width:428.500px;height:1px;background:#dcdcdc"></div>
<div class="a" style="left:1493px;top:558px;width:424.500px;height:80px;border:7px solid #e81c24;border-radius:19px;box-sizing:border-box"></div>
<div class="a" style="left:1490.500px;top:974px;width:428.500px;height:64px;background:#fff;box-shadow:0 -3px 6px rgba(0,0,0,.16);clip-path:inset(-10px 0 0 0)"></div>
<div class="dot" style="left:1506px;top:999px;background:#5a5a5a"></div>
<div class="t p1" style="left:1536.2px;top:988.05px;font-size:14px;color:#1a1a1a;-webkit-text-stroke:.45px #1a1a1a;transform-origin:0 50%;transform:scaleX(0.8729);">AUTHORIZE START OF SHOW</div>
<div class="t p2" style="left:1536px;top:1009.65px;font-size:14px;letter-spacing:0.291px;">Authorization required before takeoff</div>
</body></html>
